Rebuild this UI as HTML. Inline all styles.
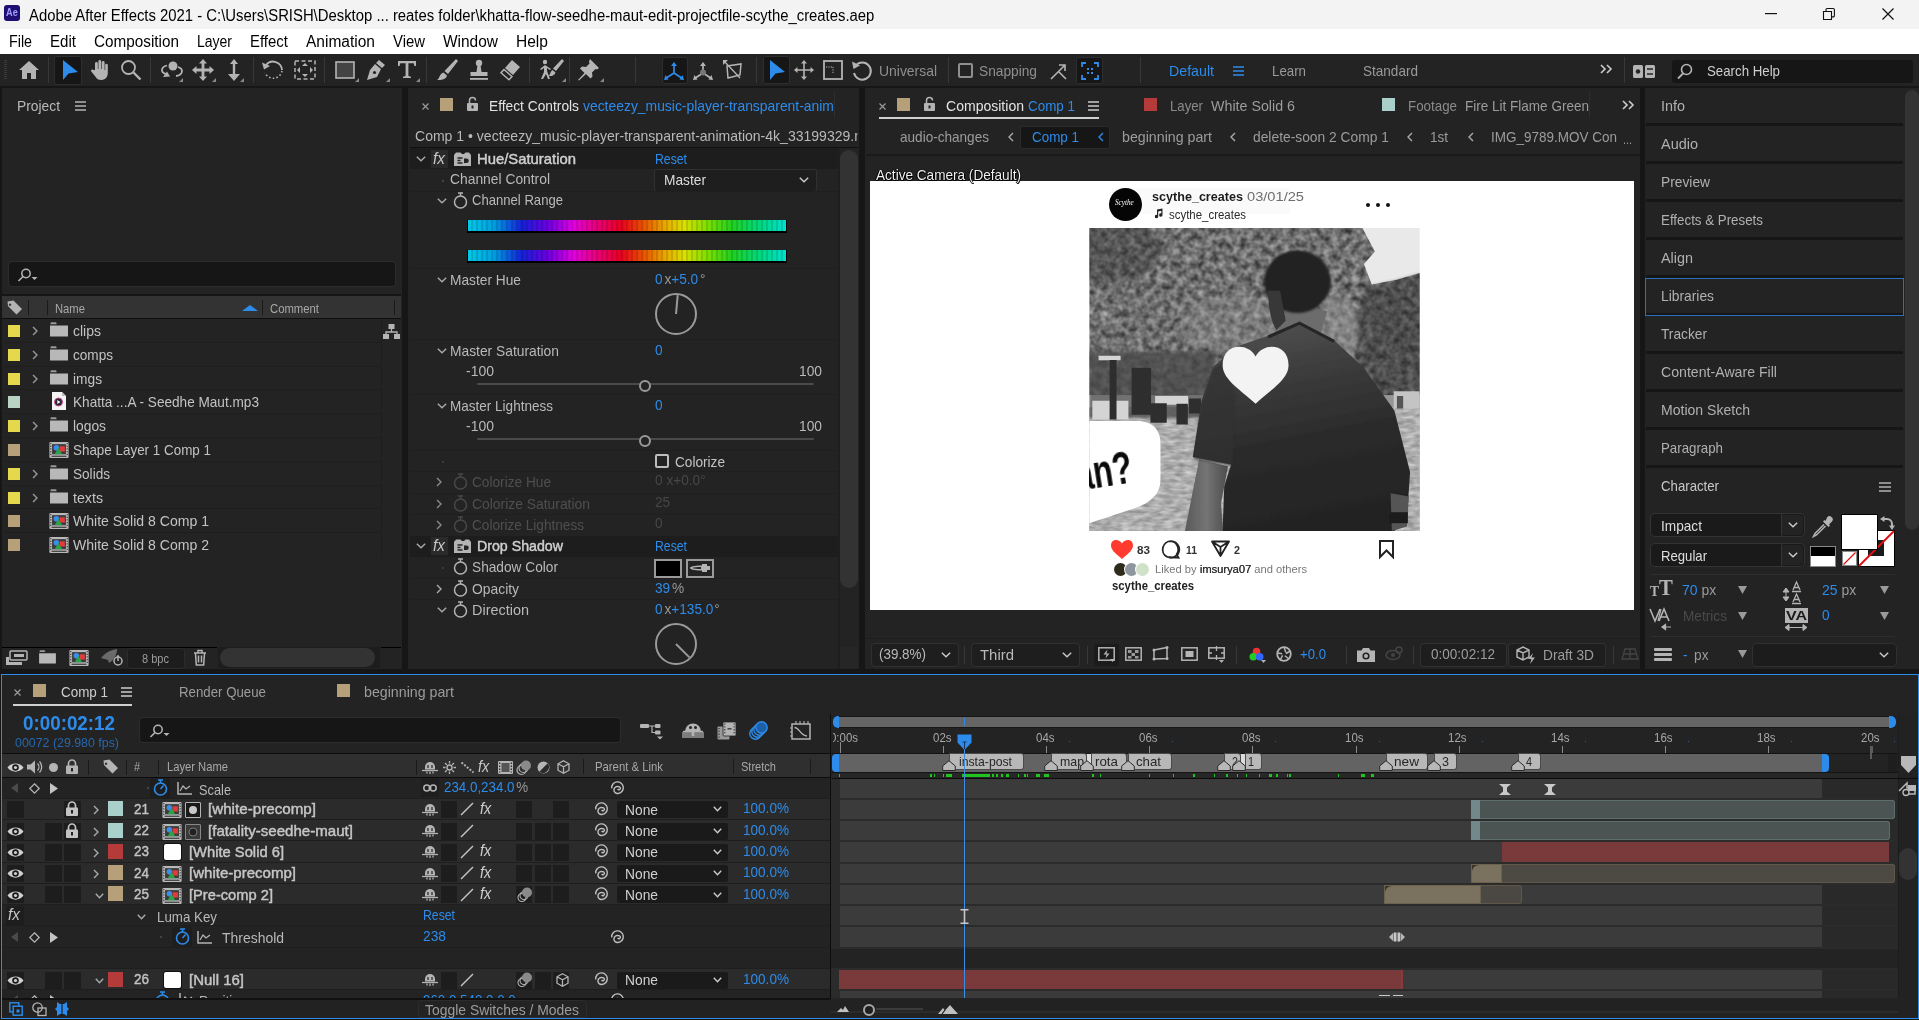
<!DOCTYPE html>
<html><head><meta charset="utf-8"><title>Adobe After Effects 2021</title>
<style>
html,body{margin:0;padding:0;}
body{width:1919px;height:1020px;overflow:hidden;background:#161616;position:relative;font-family:"Liberation Sans",sans-serif;}
body>*{position:absolute;}
.t{white-space:nowrap;line-height:20px;transform-origin:0 50%;}
svg{overflow:visible;}
</style></head><body>
<div style="left:0px;top:0px;width:1919px;height:29px;background:#f3f3f3;"></div>
<div style="left:4px;top:5px;width:16px;height:16px;background:#1f0f72;border-radius:3px;"></div>
<span class="t" style="left:6px;top:3.0px;font-size:10px;color:#a0a0ff;transform:scaleX(0.92);font-weight:bold;">Ae</span>
<span class="t" style="left:29px;top:5.5px;font-size:16px;color:#000;transform:scaleX(0.9286);">Adobe After Effects 2021 - C:\Users\SRISH\Desktop ... reates folder\khatta-flow-seedhe-maut-edit-projectfile-scythe_creates.aep</span>
<svg style="left:1765.0px;top:13.0px;" width="12" height="2" viewBox="0 0 12 2"><rect width="12" height="1.2" fill="#111"/></svg>
<svg style="left:1822.5px;top:8.0px;" width="12" height="12" viewBox="0 0 12 12"><path d="M0.5 3.5h8v8h-8z M3 3.5v-1.8a1.2 1.2 0 0 1 1.2-1.2h6a1.2 1.2 0 0 1 1.2 1.2v6a1.2 1.2 0 0 1-1.2 1.2h-1.7" fill="none" stroke="#111" stroke-width="1.1"/></svg>
<svg style="left:1882.0px;top:8.0px;" width="12" height="12" viewBox="0 0 12 12"><path d="M0.5 0.5l11 11M11.5 0.5l-11 11" stroke="#111" stroke-width="1.2"/></svg>
<div style="left:0px;top:29px;width:1919px;height:25px;background:#ffffff;"></div>
<span class="t" style="left:9px;top:32.0px;font-size:16px;color:#000;transform:scaleX(0.891);">File</span>
<span class="t" style="left:50px;top:32.0px;font-size:16px;color:#000;transform:scaleX(0.9422);">Edit</span>
<span class="t" style="left:94px;top:32.0px;font-size:16px;color:#000;transform:scaleX(0.9551);">Composition</span>
<span class="t" style="left:197px;top:32.0px;font-size:16px;color:#000;transform:scaleX(0.874);">Layer</span>
<span class="t" style="left:250px;top:32.0px;font-size:16px;color:#000;transform:scaleX(0.9347);">Effect</span>
<span class="t" style="left:306px;top:32.0px;font-size:16px;color:#000;transform:scaleX(0.9691);">Animation</span>
<span class="t" style="left:393px;top:32.0px;font-size:16px;color:#000;transform:scaleX(0.9296);">View</span>
<span class="t" style="left:443px;top:32.0px;font-size:16px;color:#000;transform:scaleX(0.9657);">Window</span>
<span class="t" style="left:516px;top:32.0px;font-size:16px;color:#000;transform:scaleX(0.9715);">Help</span>
<div style="left:0px;top:54px;width:1919px;height:33px;background:#232323;"></div>
<div style="left:0px;top:86px;width:1919px;height:2px;background:#161616;"></div>
<div style="left:4px;top:60px;width:3px;height:1px;background:#3a3a3a;"></div>
<div style="left:4px;top:62px;width:3px;height:1px;background:#3a3a3a;"></div>
<div style="left:4px;top:64px;width:3px;height:1px;background:#3a3a3a;"></div>
<div style="left:4px;top:66px;width:3px;height:1px;background:#3a3a3a;"></div>
<div style="left:4px;top:68px;width:3px;height:1px;background:#3a3a3a;"></div>
<div style="left:4px;top:70px;width:3px;height:1px;background:#3a3a3a;"></div>
<div style="left:4px;top:72px;width:3px;height:1px;background:#3a3a3a;"></div>
<div style="left:4px;top:74px;width:3px;height:1px;background:#3a3a3a;"></div>
<div style="left:4px;top:76px;width:3px;height:1px;background:#3a3a3a;"></div>
<div style="left:4px;top:78px;width:3px;height:1px;background:#3a3a3a;"></div>
<div style="left:48px;top:57px;width:1px;height:26px;background:#383838;"></div>
<div style="left:150px;top:57px;width:1px;height:26px;background:#383838;"></div>
<div style="left:253px;top:57px;width:1px;height:26px;background:#383838;"></div>
<div style="left:324px;top:57px;width:1px;height:26px;background:#383838;"></div>
<div style="left:426px;top:57px;width:1px;height:26px;background:#383838;"></div>
<div style="left:529px;top:57px;width:1px;height:26px;background:#383838;"></div>
<div style="left:569px;top:57px;width:1px;height:26px;background:#383838;"></div>
<div style="left:635px;top:57px;width:1px;height:26px;background:#383838;"></div>
<div style="left:756px;top:57px;width:1px;height:26px;background:#383838;"></div>
<div style="left:948px;top:57px;width:1px;height:26px;background:#383838;"></div>
<div style="left:1140px;top:57px;width:1px;height:26px;background:#383838;"></div>
<div style="left:1624px;top:57px;width:1px;height:26px;background:#383838;"></div>
<svg style="left:18.0px;top:60.0px;" width="22" height="20" viewBox="0 0 22 20"><path d="M11 1L1 10h3v9h5v-6h4v6h5v-9h3z" fill="#b4b4b4"/></svg>
<div style="left:54px;top:56px;width:28px;height:29px;background:#161616;border-radius:3px;box-shadow:0 0 0 1px #2e2e2e inset;"></div>
<svg style="left:62.0px;top:59.0px;" width="16" height="22" viewBox="0 0 16 22"><path d="M1 1v20l5.5-6.5L16 13z" fill="#2d8ceb"/></svg>
<svg style="left:89.0px;top:59.0px;" width="22" height="22" viewBox="0 0 22 22"><path d="M6 11V4.5a1.4 1.4 0 0 1 2.8 0V10h.6V2.5a1.4 1.4 0 0 1 2.8 0V10h.6V3.5a1.4 1.4 0 0 1 2.8 0V11h.6V6a1.3 1.3 0 0 1 2.6 0v8c0 4-2.5 7-6.5 7-3 0-4.6-1.3-6-3.6L2.3 12.5c-.8-1.4.9-2.6 2-1.4z" fill="#b4b4b4"/></svg>
<svg style="left:120.0px;top:59.0px;" width="22" height="22" viewBox="0 0 22 22"><circle cx="8.5" cy="8.5" r="6.5" fill="none" stroke="#b4b4b4" stroke-width="1.8"/><path d="M13.5 13.5l7 7" stroke="#b4b4b4" stroke-width="2.4"/></svg>
<svg style="left:160.0px;top:60.0px;" width="24" height="22" viewBox="0 0 24 22"><circle cx="13" cy="6" r="4.5" fill="#b4b4b4"/><path d="M7 5.5C1 7 0 12 6 14M18 7c6 2 5 8-2 9" fill="none" stroke="#b4b4b4" stroke-width="1.8"/><path d="M3 17l7-.5-3-5z" fill="#b4b4b4"/><path d="M23 22h-4l4-4z" fill="#888"/></svg>
<svg style="left:192.0px;top:59.0px;" width="22" height="22" viewBox="0 0 22 22"><path d="M11 0l4 4.5h-2.6V9.6H17.5V7l4.5 4-4.5 4v-2.6H12.4v5.1H15L11 22l-4-4.5h2.6v-5.1H4.5V15L0 11l4.5-4v2.6h5.1V4.5H7z" fill="#b4b4b4"/><path d="M24 23h-4l4-4z" fill="#888"/></svg>
<svg style="left:227.0px;top:59.0px;" width="14" height="22" viewBox="0 0 14 22"><path d="M7 0l4 5H8.2v10H13l-6 7-6-7h4.8V5H3z" fill="#b4b4b4"/><path d="M17 23h-4l4-4z" fill="#888"/></svg>
<svg style="left:262.0px;top:59.0px;" width="22" height="22" viewBox="0 0 22 22"><path d="M4 6A9 9 0 0 1 20 11" fill="none" stroke="#b4b4b4" stroke-width="1.8"/><path d="M0 3.5l2 7 6-3.5z" fill="#b4b4b4"/><path d="M20 12A9 9 0 0 1 3 14" fill="none" stroke="#b4b4b4" stroke-width="1.6" stroke-dasharray="1.5 2.2"/></svg>
<svg style="left:294.0px;top:60.0px;" width="22" height="20" viewBox="0 0 22 20"><rect x="1" y="1" width="20" height="18" fill="none" stroke="#b4b4b4" stroke-width="1.5" stroke-dasharray="4 2.5"/><path d="M11 3l3 3H8zM11 17l3-3H8zM3 10l3-3v6zM19 10l-3-3v6z" fill="#b4b4b4"/></svg>
<svg style="left:335.0px;top:61.0px;" width="20" height="18" viewBox="0 0 20 18"><rect x="1" y="1" width="18" height="16" fill="#444" stroke="#b4b4b4" stroke-width="1.6"/><path d="M24 21h-4l4-4z" fill="#888"/></svg>
<svg style="left:366.0px;top:59.0px;" width="20" height="22" viewBox="0 0 20 22"><path d="M13 1l6 5-3 3-6-5zM9 5l6 5-4 8L1 21l3-10z" fill="#b4b4b4"/><circle cx="8.5" cy="13.5" r="1.6" fill="#232323"/><path d="M24 23h-4l4-4z" fill="#888"/></svg>
<svg style="left:398.0px;top:61.0px;" width="18" height="18" viewBox="0 0 18 18"><path d="M0 0h18v5h-1.6l-.6-2.8H10.4V15l2.6.8V17H5v-1.2l2.6-.8V2.2H2.2L1.6 5H0z" fill="#b4b4b4"/><path d="M22 21h-4l4-4z" fill="#888"/></svg>
<svg style="left:436.0px;top:59.0px;" width="22" height="22" viewBox="0 0 22 22"><path d="M20 0l2 2-10 13-3.5-3zM7.5 13.5l3.5 3c-1 4-6 5-10 4.5 3-1.5 2-6 6.500-7.5z" fill="#b4b4b4"/></svg>
<svg style="left:468.0px;top:59.0px;" width="22" height="22" viewBox="0 0 22 22"><circle cx="11" cy="4" r="3.2" fill="#b4b4b4"/><path d="M9.5 6h3l1 7h6v4H2.500v-4h6z" fill="#b4b4b4"/><rect x="2" y="19" width="18" height="1.8" fill="#b4b4b4"/></svg>
<svg style="left:499.0px;top:59.0px;" width="22" height="22" viewBox="0 0 22 22"><path d="M13 1l8 7-7 8-8-7z" fill="#b4b4b4"/><path d="M5 10.500l8 7-3 3.300-8-7z" fill="none" stroke="#b4b4b4" stroke-width="1.5"/></svg>
<svg style="left:538.0px;top:59.0px;" width="26" height="22" viewBox="0 0 26 22"><circle cx="7" cy="3" r="2.2" fill="#b4b4b4"/><path d="M7 6l-5 4 1 1 3-2v4l-3 7h2l3-5 2 5h2l-3-8V9l3 2 1-1z" fill="#b4b4b4"/><path d="M24 0l2 2-8 10-3-2.500zM14.500 11l3 2.500c-1 3-4 4-7 3.500 2-1 1.500-4.500 4-6z" fill="#b4b4b4"/><path d="M28 23h-4l4-4z" fill="#888"/></svg>
<svg style="left:578.0px;top:59.0px;" width="22" height="22" viewBox="0 0 22 22"><path d="M12 0l9 9-2 1.500-1.500-.5-3.500 3.500.5 4-2 2-4.500-4.500L1 21.500 0 21l6.500-7L2 9.500l2-2 4 .5L11.500 4.500 11 2.500z" fill="#b4b4b4"/><path d="M26 23h-4l4-4z" fill="#888"/></svg>
<div style="left:662px;top:57px;width:26px;height:27px;background:#161616;border-radius:3px;box-shadow:0 0 0 1px #2e2e2e inset;"></div>
<svg style="left:664.0px;top:62.0px;" width="20" height="18" viewBox="0 0 20 18"><path d="M10 11V1.500M10 11l-8.500 5.500M10 11l8.500 5.500" stroke="#2d8ceb" stroke-width="1.700" fill="none"/><path d="M10 0l3 4H7zM0 18l1.500-5 3 4.500zM20 18l-1.500-5-3 4.500z" fill="#2d8ceb"/></svg>
<svg style="left:693.0px;top:62.0px;" width="20" height="18" viewBox="0 0 20 18"><path d="M10 11V1.500M10 11l-8.500 5.500M10 11l8.500 5.500" stroke="#b4b4b4" stroke-width="1.700" fill="none"/><path d="M10 0l3 4H7zM0 18l1.500-5 3 4.500zM20 18l-1.500-5-3 4.500z" fill="#b4b4b4"/><circle cx="10" cy="10.500" r="3" fill="#777"/></svg>
<svg style="left:723.0px;top:60.0px;" width="20" height="20" viewBox="0 0 20 20"><path d="M4 6l14-2-1 11-12 3z" fill="none" stroke="#b4b4b4" stroke-width="1.500"/><path d="M1 1l16 17" stroke="#b4b4b4" stroke-width="1.300"/><path d="M0 0h5l-5 5z" fill="#b4b4b4"/></svg>
<div style="left:763px;top:56px;width:27px;height:28px;background:#161616;border-radius:3px;box-shadow:0 0 0 1px #2e2e2e inset;"></div>
<svg style="left:769.0px;top:59.0px;" width="16" height="22" viewBox="0 0 16 22"><path d="M1 1v20l5.500-6.500L16 13z" fill="#2d8ceb"/></svg>
<svg style="left:794.0px;top:60.0px;" width="20" height="20" viewBox="0 0 20 20"><path d="M10 0l3 3.500h-2.200v5.700h5.700V7L20 10l-3.500 3v-2.200h-5.700v5.700H13L10 20l-3-3.500h2.200v-5.700H3.500V13L0 10l3.500-3v2.200h5.700V3.500H7z" fill="#b4b4b4"/></svg>
<svg style="left:823.0px;top:60.0px;" width="20" height="20" viewBox="0 0 20 20"><rect x="1" y="1" width="18" height="18" fill="none" stroke="#b4b4b4" stroke-width="1.800"/><path d="M3 7h7M10 7v7" stroke="#b4b4b4" stroke-width="1" stroke-dasharray="1.200 1.200"/></svg>
<svg style="left:851.0px;top:60.0px;" width="22" height="20" viewBox="0 0 22 20"><path d="M4.500 6A8.500 8.500 0 1 1 3 13" fill="none" stroke="#b4b4b4" stroke-width="2"/><path d="M1 1.500l1.500 7.500 6.500-3.500z" fill="#b4b4b4"/></svg>
<span class="t" style="left:879px;top:61.0px;font-size:15px;color:#8f8f8f;transform:scaleX(0.9278);">Universal</span>
<div style="left:958px;top:63px;width:15px;height:15px;background:transparent;border:2px solid #8f8f8f;border-radius:2px;box-sizing:border-box;"></div>
<span class="t" style="left:979px;top:61.0px;font-size:15px;color:#8f8f8f;transform:scaleX(0.915);">Snapping</span>
<svg style="left:1050.0px;top:62.0px;" width="18" height="18" viewBox="0 0 18 18"><path d="M1 17L15 3M9 3h6v6M9 10l7 7" fill="none" stroke="#b4b4b4" stroke-width="1.600"/></svg>
<div style="left:1076px;top:57px;width:27px;height:27px;background:#161616;border-radius:3px;box-shadow:0 0 0 1px #2e2e2e inset;"></div>
<svg style="left:1082.0px;top:63.0px;" width="16" height="16" viewBox="0 0 16 16"><path d="M0 4V0h4M12 0h4v4M16 12v4h-4M4 16H0v-4" fill="none" stroke="#2d8ceb" stroke-width="1.800"/><path d="M5 5h2v2H5zM9 5h2v2H9zM5 9h2v2H5zM9 9h2v2H9z" fill="#2d8ceb"/></svg>
<span class="t" style="left:1169px;top:61.0px;font-size:15px;color:#2d8ceb;transform:scaleX(0.9467);">Default</span>
<svg style="left:1232.5px;top:66.0px;" width="11" height="10" viewBox="0 0 11 10"><path d="M0 1h11M0 5h11M0 9h11" stroke="#2d8ceb" stroke-width="1.600"/></svg>
<span class="t" style="left:1272px;top:61.0px;font-size:15px;color:#9a9a9a;transform:scaleX(0.886);">Learn</span>
<span class="t" style="left:1363px;top:61.0px;font-size:15px;color:#9a9a9a;transform:scaleX(0.9033);">Standard</span>
<svg style="left:1600.0px;top:64.0px;" width="12" height="10" viewBox="0 0 12 10"><path d="M1 1l4 4-4 4M7 1l4 4-4 4" fill="none" stroke="#ccc" stroke-width="1.600"/></svg>
<svg style="left:1633.0px;top:64.5px;" width="22" height="13" viewBox="0 0 22 13"><rect x="0" y="0" width="10" height="13" rx="1.500" fill="#b4b4b4"/><rect x="12" y="0" width="10" height="13" rx="1.500" fill="#b4b4b4"/><circle cx="5" cy="6.500" r="2.200" fill="#232323"/><path d="M14 4h6M14 9h6" stroke="#232323" stroke-width="1.500"/></svg>
<div style="left:1672px;top:60px;width:241px;height:23px;background:#161616;border-radius:3px;"></div>
<svg style="left:1677.0px;top:63.0px;" width="16" height="16" viewBox="0 0 16 16"><circle cx="9.500" cy="6.500" r="5" fill="none" stroke="#b4b4b4" stroke-width="1.600"/><path d="M6 10.500L1 15.500" stroke="#b4b4b4" stroke-width="1.800"/></svg>
<span class="t" style="left:1707px;top:61.0px;font-size:15px;color:#cfcfcf;transform:scaleX(0.8843);">Search Help</span>
<div style="left:2px;top:88px;width:400px;height:581px;background:#232323;"></div>
<span class="t" style="left:17px;top:96.0px;font-size:15px;color:#b9b9b9;transform:scaleX(0.921);">Project</span>
<svg style="left:74.5px;top:101.0px;" width="11" height="10" viewBox="0 0 11 10"><path d="M0 1h11M0 5h11M0 9h11" stroke="#b4b4b4" stroke-width="1.500"/></svg>
<div style="left:9px;top:262px;width:386px;height:24px;background:#161616;border-radius:3px;box-shadow:0 0 0 1px #2c2c2c;"></div>
<svg style="left:18.0px;top:268.0px;" width="20" height="14" viewBox="0 0 20 14"><circle cx="8" cy="5.500" r="4.200" fill="none" stroke="#b4b4b4" stroke-width="1.500"/><path d="M5 8.500L0.500 13" stroke="#b4b4b4" stroke-width="1.600"/><path d="M13.500 9h6l-3 3z" fill="#b4b4b4"/></svg>
<div style="left:2px;top:294px;width:399px;height:2px;background:#151515;"></div>
<div style="left:2px;top:296px;width:399px;height:22px;background:#333333;"></div>
<div style="left:2px;top:318px;width:399px;height:1px;background:#0f0f0f;"></div>
<div style="left:28px;top:300px;width:1px;height:15px;background:#1a1a1a;"></div>
<div style="left:47px;top:300px;width:1px;height:15px;background:#1a1a1a;"></div>
<div style="left:262px;top:300px;width:1px;height:15px;background:#1a1a1a;"></div>
<div style="left:394px;top:300px;width:1px;height:15px;background:#1a1a1a;"></div>
<svg style="left:7.0px;top:299.5px;" width="16" height="15" viewBox="0 0 16 15"><path d="M0.500 1.500l6-1 8.500 8.500-5.500 5.500L1 6zM3 3.500a1.200 1.200 0 1 0 .1 0z" fill="#b4b4b4" fill-rule="evenodd"/></svg>
<span class="t" style="left:55px;top:299.0px;font-size:13px;color:#a8a8a8;transform:scaleX(0.8649);">Name</span>
<span class="t" style="left:270px;top:299.0px;font-size:13px;color:#a8a8a8;transform:scaleX(0.8694);">Comment</span>
<svg style="left:242.0px;top:305.0px;" width="16" height="6" viewBox="0 0 16 6"><path d="M0 6l8-6 8 6z" fill="#2d8ceb"/></svg>
<div style="left:8px;top:325px;width:12px;height:12px;background:#e4d84c;"></div>
<svg style="left:32.0px;top:326.0px;" width="6" height="10" viewBox="0 0 6 10"><path d="M1 1l4 4-4 4" fill="none" stroke="#9a9a9a" stroke-width="1.400"/></svg>
<svg style="left:50px;top:322px;" width="18" height="15" viewBox="0 0 18 15"><path d="M0 3.500h18v11H0z" fill="#b8b8b8"/><path d="M0.500 1.200a1 1 0 0 1 1-1h4a1 1 0 0 1 1 1v1H0.500z" fill="#9a9a9a"/></svg>
<span class="t" style="left:73px;top:321.0px;font-size:15px;color:#c3c3c3;transform:scaleX(0.9333);">clips</span>
<div style="left:4px;top:342px;width:377px;height:1px;background:#1e1e1e;"></div>
<div style="left:8px;top:349px;width:12px;height:12px;background:#e4d84c;"></div>
<svg style="left:32.0px;top:349.8px;" width="6" height="10" viewBox="0 0 6 10"><path d="M1 1l4 4-4 4" fill="none" stroke="#9a9a9a" stroke-width="1.400"/></svg>
<svg style="left:50px;top:346px;" width="18" height="15" viewBox="0 0 18 15"><path d="M0 3.500h18v11H0z" fill="#b8b8b8"/><path d="M0.500 1.200a1 1 0 0 1 1-1h4a1 1 0 0 1 1 1v1H0.500z" fill="#9a9a9a"/></svg>
<span class="t" style="left:73px;top:344.8px;font-size:15px;color:#c3c3c3;transform:scaleX(0.9052);">comps</span>
<div style="left:4px;top:366px;width:377px;height:1px;background:#1e1e1e;"></div>
<div style="left:8px;top:373px;width:12px;height:12px;background:#e4d84c;"></div>
<svg style="left:32.0px;top:373.6px;" width="6" height="10" viewBox="0 0 6 10"><path d="M1 1l4 4-4 4" fill="none" stroke="#9a9a9a" stroke-width="1.400"/></svg>
<svg style="left:50px;top:370px;" width="18" height="15" viewBox="0 0 18 15"><path d="M0 3.500h18v11H0z" fill="#b8b8b8"/><path d="M0.500 1.200a1 1 0 0 1 1-1h4a1 1 0 0 1 1 1v1H0.500z" fill="#9a9a9a"/></svg>
<span class="t" style="left:73px;top:368.6px;font-size:15px;color:#c3c3c3;transform:scaleX(0.9156);">imgs</span>
<div style="left:4px;top:389px;width:377px;height:1px;background:#1e1e1e;"></div>
<div style="left:8px;top:396px;width:12px;height:12px;background:#b9d3c4;"></div>
<svg style="left:52px;top:392px;" width="14" height="18" viewBox="0 0 14 18"><path d="M0 0h10l4 4v14H0z" fill="#f4f4f4"/><path d="M10 0v4h4z" fill="#bbb"/><circle cx="6.500" cy="10" r="4" fill="#2a2438"/><circle cx="6.500" cy="10" r="4" fill="none" stroke="#d84a8a" stroke-width="0.900"/><path d="M5.300 8v4l3.200-2z" fill="#fff"/></svg>
<span class="t" style="left:73px;top:392.4px;font-size:15px;color:#c3c3c3;transform:scaleX(0.9065);">Khatta ...A - Seedhe Maut.mp3</span>
<div style="left:4px;top:413px;width:377px;height:1px;background:#1e1e1e;"></div>
<div style="left:8px;top:420px;width:12px;height:12px;background:#e4d84c;"></div>
<svg style="left:32.0px;top:421.2px;" width="6" height="10" viewBox="0 0 6 10"><path d="M1 1l4 4-4 4" fill="none" stroke="#9a9a9a" stroke-width="1.400"/></svg>
<svg style="left:50px;top:417px;" width="18" height="15" viewBox="0 0 18 15"><path d="M0 3.500h18v11H0z" fill="#b8b8b8"/><path d="M0.500 1.200a1 1 0 0 1 1-1h4a1 1 0 0 1 1 1v1H0.500z" fill="#9a9a9a"/></svg>
<span class="t" style="left:73px;top:416.2px;font-size:15px;color:#c3c3c3;transform:scaleX(0.9203);">logos</span>
<div style="left:4px;top:437px;width:377px;height:1px;background:#1e1e1e;"></div>
<div style="left:8px;top:444px;width:12px;height:12px;background:#b5a07a;"></div>
<svg style="left:49px;top:442px;" width="20" height="16" viewBox="0 0 18 15"><rect x="0" y="0" width="18" height="15" rx="1" fill="#b8b8b8"/><rect x="2.500" y="2" width="13" height="9.500" fill="#3c3c3c"/><path d="M0.800 1.500h1M0.800 4h1M0.800 6.500h1M0.800 9h1M0.800 11.500h1M16.200 1.500h1M16.200 4h1M16.200 6.500h1M16.200 9h1M16.200 11.500h1" stroke="#333" stroke-width="1.200"/><circle cx="6.500" cy="5.500" r="2.600" fill="#3b8ee8"/><rect x="9.500" y="4" width="5" height="5" fill="#e23b3b"/><path d="M8.500 5.500l3.500 6h-7z" fill="#2aa44a"/><rect x="2" y="12.800" width="14" height="1.200" fill="#444"/></svg>
<span class="t" style="left:73px;top:440.0px;font-size:15px;color:#c3c3c3;transform:scaleX(0.8944);">Shape Layer 1 Comp 1</span>
<div style="left:4px;top:461px;width:377px;height:1px;background:#1e1e1e;"></div>
<div style="left:8px;top:468px;width:12px;height:12px;background:#e4d84c;"></div>
<svg style="left:32.0px;top:468.8px;" width="6" height="10" viewBox="0 0 6 10"><path d="M1 1l4 4-4 4" fill="none" stroke="#9a9a9a" stroke-width="1.400"/></svg>
<svg style="left:50px;top:465px;" width="18" height="15" viewBox="0 0 18 15"><path d="M0 3.500h18v11H0z" fill="#b8b8b8"/><path d="M0.500 1.200a1 1 0 0 1 1-1h4a1 1 0 0 1 1 1v1H0.500z" fill="#9a9a9a"/></svg>
<span class="t" style="left:73px;top:463.8px;font-size:15px;color:#c3c3c3;transform:scaleX(0.9059);">Solids</span>
<div style="left:4px;top:485px;width:377px;height:1px;background:#1e1e1e;"></div>
<div style="left:8px;top:492px;width:12px;height:12px;background:#e4d84c;"></div>
<svg style="left:32.0px;top:492.6px;" width="6" height="10" viewBox="0 0 6 10"><path d="M1 1l4 4-4 4" fill="none" stroke="#9a9a9a" stroke-width="1.400"/></svg>
<svg style="left:50px;top:489px;" width="18" height="15" viewBox="0 0 18 15"><path d="M0 3.500h18v11H0z" fill="#b8b8b8"/><path d="M0.500 1.200a1 1 0 0 1 1-1h4a1 1 0 0 1 1 1v1H0.500z" fill="#9a9a9a"/></svg>
<span class="t" style="left:73px;top:487.6px;font-size:15px;color:#c3c3c3;transform:scaleX(0.9467);">texts</span>
<div style="left:4px;top:508px;width:377px;height:1px;background:#1e1e1e;"></div>
<div style="left:8px;top:515px;width:12px;height:12px;background:#b5a07a;"></div>
<svg style="left:49px;top:513px;" width="20" height="16" viewBox="0 0 18 15"><rect x="0" y="0" width="18" height="15" rx="1" fill="#b8b8b8"/><rect x="2.500" y="2" width="13" height="9.500" fill="#3c3c3c"/><path d="M0.800 1.500h1M0.800 4h1M0.800 6.500h1M0.800 9h1M0.800 11.500h1M16.200 1.500h1M16.200 4h1M16.200 6.500h1M16.200 9h1M16.200 11.500h1" stroke="#333" stroke-width="1.200"/><circle cx="6.500" cy="5.500" r="2.600" fill="#3b8ee8"/><rect x="9.500" y="4" width="5" height="5" fill="#e23b3b"/><path d="M8.500 5.500l3.500 6h-7z" fill="#2aa44a"/><rect x="2" y="12.800" width="14" height="1.200" fill="#444"/></svg>
<span class="t" style="left:73px;top:511.4px;font-size:15px;color:#c3c3c3;transform:scaleX(0.9374);">White Solid 8 Comp 1</span>
<div style="left:4px;top:532px;width:377px;height:1px;background:#1e1e1e;"></div>
<div style="left:8px;top:539px;width:12px;height:12px;background:#b5a07a;"></div>
<svg style="left:49px;top:537px;" width="20" height="16" viewBox="0 0 18 15"><rect x="0" y="0" width="18" height="15" rx="1" fill="#b8b8b8"/><rect x="2.500" y="2" width="13" height="9.500" fill="#3c3c3c"/><path d="M0.800 1.500h1M0.800 4h1M0.800 6.500h1M0.800 9h1M0.800 11.500h1M16.200 1.500h1M16.200 4h1M16.200 6.500h1M16.200 9h1M16.200 11.500h1" stroke="#333" stroke-width="1.200"/><circle cx="6.500" cy="5.500" r="2.600" fill="#3b8ee8"/><rect x="9.500" y="4" width="5" height="5" fill="#e23b3b"/><path d="M8.500 5.500l3.500 6h-7z" fill="#2aa44a"/><rect x="2" y="12.800" width="14" height="1.200" fill="#444"/></svg>
<span class="t" style="left:73px;top:535.2px;font-size:15px;color:#c3c3c3;transform:scaleX(0.9374);">White Solid 8 Comp 2</span>
<div style="left:381px;top:320px;width:1px;height:236px;background:#1e1e1e;"></div>
<svg style="left:382.5px;top:323.5px;" width="17" height="15" viewBox="0 0 17 15"><rect x="5.500" y="0" width="6" height="5" fill="#b4b4b4"/><rect x="0" y="10" width="6" height="5" fill="#b4b4b4"/><rect x="11" y="10" width="6" height="5" fill="#b4b4b4"/><path d="M8.500 5v3M3 10V8h11v2" fill="none" stroke="#b4b4b4" stroke-width="1.300"/></svg>
<div style="left:2px;top:647px;width:215px;height:1px;background:#000;"></div>
<div style="left:381px;top:647px;width:20px;height:1px;background:#000;"></div>
<div style="left:218px;top:647px;width:162px;height:21px;background:#1d1d1d;"></div>
<div style="left:220px;top:648px;width:155px;height:19px;background:#333333;border-radius:10px;"></div>
<div style="left:128px;top:649px;width:56px;height:19px;background:#1d1d1d;border-radius:3px;box-shadow:0 0 0 1px #2b2b2b;"></div>
<span class="t" style="left:142px;top:649.0px;font-size:13px;color:#9a9a9a;transform:scaleX(0.8487);">8 bpc</span>
<svg style="left:6.0px;top:650.0px;" width="22" height="16" viewBox="0 0 22 16"><rect x="4" y="1" width="17" height="9" rx="1" fill="none" stroke="#b4b4b4" stroke-width="1.500"/><rect x="8" y="4" width="10" height="3" fill="#b4b4b4"/><path d="M0 7h3v8H0zM0 12h16v3H0z" fill="#b4b4b4"/></svg>
<svg style="left:39px;top:650px;" width="17" height="14" viewBox="0 0 18 15"><path d="M0 3.500h18v11H0z" fill="#b8b8b8"/><path d="M0.500 1.200a1 1 0 0 1 1-1h4a1 1 0 0 1 1 1v1H0.500z" fill="#9a9a9a"/></svg>
<svg style="left:68px;top:650px;" width="22" height="16" viewBox="0 0 18 15"><rect x="0" y="0" width="18" height="15" rx="1" fill="#b8b8b8"/><rect x="2.500" y="2" width="13" height="9.500" fill="#3c3c3c"/><path d="M0.800 1.500h1M0.800 4h1M0.800 6.500h1M0.800 9h1M0.800 11.500h1M16.200 1.500h1M16.200 4h1M16.200 6.500h1M16.200 9h1M16.200 11.500h1" stroke="#333" stroke-width="1.200"/><circle cx="6.500" cy="5.500" r="2.600" fill="#3b8ee8"/><rect x="9.500" y="4" width="5" height="5" fill="#e23b3b"/><path d="M8.500 5.500l3.500 6h-7z" fill="#2aa44a"/><rect x="2" y="12.800" width="14" height="1.200" fill="#444"/></svg>
<svg style="left:101.0px;top:649.0px;" width="22" height="18" viewBox="0 0 22 18"><path d="M0 9C4 4 9 1 16 0c0 6-3 11-8 14l-1-3z" fill="#6a6a6a"/><circle cx="17" cy="12" r="4" fill="none" stroke="#b4b4b4" stroke-width="1.500"/><path d="M17 6v6" stroke="#b4b4b4" stroke-width="1.500"/></svg>
<svg style="left:193.0px;top:648.5px;" width="14" height="17" viewBox="0 0 14 17"><path d="M1 4h12M5 4V1.500h4V4M2.500 4l.8 12h7.400l.8-12M5.500 6.500v7M8.500 6.500v7" fill="none" stroke="#b4b4b4" stroke-width="1.500"/></svg>
<div style="left:408px;top:88px;width:451px;height:581px;background:#232323;"></div>
<svg style="left:421.5px;top:102.5px;" width="7" height="7" viewBox="0 0 7 7"><path d="M0.500 0.500l6 6M6.500 0.500l-6 6" stroke="#9a9a9a" stroke-width="1.200"/></svg>
<div style="left:440px;top:98px;width:13px;height:13px;background:#b5a07a;"></div>
<svg style="left:466.5px;top:97.0px;" width="11" height="14" viewBox="0 0 11 14"><rect x="0" y="6" width="11" height="8" rx="1" fill="#b4b4b4"/><path d="M2.500 6V3.500a3 3 0 0 1 6 0" fill="none" stroke="#b4b4b4" stroke-width="1.500"/><rect x="4.500" y="8.500" width="2" height="3" fill="#232323"/></svg>
<span class="t" style="left:489px;top:96.0px;font-size:15px;color:#e4e4e4;transform:scaleX(0.9172);">Effect Controls</span>
<span class="t" style="left:583px;top:96.0px;font-size:15px;color:#2d8ceb;transform:scaleX(0.9262);">vecteezy_music-player-transparent-anim</span>
<div style="left:834px;top:92px;width:1px;height:26px;background:#2e2e2e;"></div>
<span class="t" style="left:415px;top:126.0px;font-size:15px;color:#b9b9b9;transform:scaleX(0.9352);clip-path:inset(0 1.500px 0 0);">Comp 1 • vecteezy_music-player-transparent-animation-4k_33199329.r</span>
<div style="left:410px;top:147px;width:448px;height:1px;background:#111;"></div>
<div style="left:838px;top:149px;width:2px;height:520px;background:#1e1e1e;"></div>
<div style="left:840px;top:149px;width:18px;height:520px;background:#232323;"></div>
<div style="left:840px;top:150px;width:18px;height:438px;background:#333;border-radius:9px;"></div>
<div style="left:840px;top:647px;width:18px;height:21px;background:#262626;"></div>
<div style="left:410px;top:148px;width:428px;height:21px;background:#1d1d1d;"></div>
<svg style="left:416.0px;top:156.0px;" width="10" height="6" viewBox="0 0 10 6"><path d="M0.800 0.800l4.2 4 4.2-4" fill="none" stroke="#aaa" stroke-width="1.400"/></svg>
<div style="left:431px;top:150px;width:17px;height:18px;background:#2a2a2a;"></div>
<span class="t" style="left:433px;top:148.5px;font-size:17px;color:#c8c8c8;transform:scaleX(0.9);font-style:italic;">fx</span>
<svg style="left:453.5px;top:152.0px;" width="17" height="14" viewBox="0 0 17 14"><path d="M0 3l2-2.500h4.500L8 2h2L11.500.500H15L17 3v11H0z" fill="#b4b4b4"/><path d="M3.500 6h5M3.500 8.500h3M3.500 11h5" stroke="#232323" stroke-width="1.300"/><path d="M10 6.500h2.500a2.200 2.200 0 0 1 0 4.500H10z" fill="#232323"/></svg>
<span class="t" style="left:477px;top:149.0px;font-size:15px;color:#cfcfcf;transform:scaleX(0.9892);-webkit-text-stroke:0.450px #cfcfcf;">Hue/Saturation</span>
<span class="t" style="left:655px;top:149.0px;font-size:15px;color:#2d8ceb;transform:scaleX(0.8166);">Reset</span>
<span class="t" style="left:450px;top:169.0px;font-size:15px;color:#b9b9b9;transform:scaleX(0.9225);">Channel Control</span>
<div style="left:442px;top:180px;width:2px;height:2px;background:#444;"></div>
<div style="left:655px;top:170px;width:161px;height:21px;background:#1e1e1e;box-shadow:0 0 0 1px #303030;border-radius:2px;"></div>
<span class="t" style="left:664px;top:170.0px;font-size:15px;color:#dcdcdc;transform:scaleX(0.9158);">Master</span>
<svg style="left:799.0px;top:177.0px;" width="10" height="6" viewBox="0 0 10 6"><path d="M0.800 0.800l4.2 4 4.2-4" fill="none" stroke="#ccc" stroke-width="1.400"/></svg>
<div style="left:410px;top:191px;width:428px;height:1px;background:#1f1f1f;"></div>
<svg style="left:437.0px;top:198.0px;" width="10" height="6" viewBox="0 0 10 6"><path d="M0.800 0.800l4.2 4 4.2-4" fill="none" stroke="#aaa" stroke-width="1.400"/></svg>
<svg style="left:452.5px;top:191.5px;" width="15" height="17" viewBox="0 0 15 17"><circle cx="7.500" cy="10" r="6" fill="none" stroke="#b4b4b4" stroke-width="1.500"/><path d="M5 1h5M7.500 1v3" stroke="#b4b4b4" stroke-width="1.400"/></svg>
<span class="t" style="left:472px;top:190.0px;font-size:15px;color:#b9b9b9;transform:scaleX(0.8729);">Channel Range</span>
<div style="left:467px;top:220px;width:320px;height:13px;background:#000;"></div>
<div style="left:468px;top:220px;width:318px;height:11px;background:repeating-linear-gradient(90deg,rgba(0,0,0,0) 0px,rgba(0,0,0,0) 3px,rgba(0,0,0,0.120) 3px,rgba(0,0,0,0.120) 5px),linear-gradient(90deg,#00c8e6 0%,#00a0e0 8%,#1420d8 17%,#6a00e0 25%,#e000e0 33%,#e80080 40%,#e80020 48%,#e85000 55%,#e8a800 62%,#d8e000 68%,#80e000 75%,#20d020 83%,#00d880 92%,#00e0d0 100%);"></div>
<div style="left:467px;top:250px;width:320px;height:13px;background:#000;"></div>
<div style="left:468px;top:250px;width:318px;height:11px;background:repeating-linear-gradient(90deg,rgba(0,0,0,0) 0px,rgba(0,0,0,0) 3px,rgba(0,0,0,0.120) 3px,rgba(0,0,0,0.120) 5px),linear-gradient(90deg,#00c8e6 0%,#00a0e0 8%,#1420d8 17%,#6a00e0 25%,#e000e0 33%,#e80080 40%,#e80020 48%,#e85000 55%,#e8a800 62%,#d8e000 68%,#80e000 75%,#20d020 83%,#00d880 92%,#00e0d0 100%);"></div>
<div style="left:410px;top:268px;width:428px;height:1px;background:#1f1f1f;"></div>
<svg style="left:437.0px;top:277.0px;" width="10" height="6" viewBox="0 0 10 6"><path d="M0.800 0.800l4.2 4 4.2-4" fill="none" stroke="#aaa" stroke-width="1.400"/></svg>
<span class="t" style="left:450px;top:270.0px;font-size:15px;color:#b9b9b9;transform:scaleX(0.9156);">Master Hue</span>
<span class="t" style="left:655px;top:269.0px;font-size:15px;color:#2d8ceb;transform:scaleX(0.91);">0<span style="color:#999;margin-left:2px">x</span>+5.0<span style="color:#999;margin-left:2px">°</span></span>
<svg style="left:654px;top:292px;" width="44" height="44" viewBox="0 0 44 44"><circle cx="22" cy="22" r="20" fill="none" stroke="#9a9a9a" stroke-width="2"/><path d="M22 22L23.7 3.1" stroke="#9a9a9a" stroke-width="2"/></svg>
<div style="left:410px;top:339px;width:428px;height:1px;background:#1f1f1f;"></div>
<svg style="left:437.0px;top:348.0px;" width="10" height="6" viewBox="0 0 10 6"><path d="M0.800 0.800l4.2 4 4.2-4" fill="none" stroke="#aaa" stroke-width="1.400"/></svg>
<span class="t" style="left:450px;top:341.0px;font-size:15px;color:#b9b9b9;transform:scaleX(0.9204);">Master Saturation</span>
<span class="t" style="left:655px;top:340.0px;font-size:15px;color:#2d8ceb;transform:scaleX(0.91);">0</span>
<span class="t" style="left:466px;top:361.0px;font-size:15px;color:#b9b9b9;transform:scaleX(0.9324);">-100</span>
<span class="t" style="left:799px;top:361.0px;font-size:15px;color:#b9b9b9;transform:scaleX(0.9189);">100</span>
<div style="left:477px;top:383px;width:337px;height:2px;background:#4a4a4a;border-radius:1px;"></div>
<div style="left:639px;top:380px;width:12px;height:12px;background:#232323;border:2.500px solid #9a9a9a;border-radius:50%;box-sizing:border-box;"></div>
<div style="left:410px;top:394px;width:428px;height:1px;background:#1f1f1f;"></div>
<svg style="left:437.0px;top:403.0px;" width="10" height="6" viewBox="0 0 10 6"><path d="M0.800 0.800l4.2 4 4.2-4" fill="none" stroke="#aaa" stroke-width="1.400"/></svg>
<span class="t" style="left:450px;top:396.0px;font-size:15px;color:#b9b9b9;transform:scaleX(0.9015);">Master Lightness</span>
<span class="t" style="left:655px;top:395.0px;font-size:15px;color:#2d8ceb;transform:scaleX(0.91);">0</span>
<span class="t" style="left:466px;top:416.0px;font-size:15px;color:#b9b9b9;transform:scaleX(0.9324);">-100</span>
<span class="t" style="left:799px;top:416.0px;font-size:15px;color:#b9b9b9;transform:scaleX(0.9189);">100</span>
<div style="left:477px;top:438px;width:337px;height:2px;background:#4a4a4a;border-radius:1px;"></div>
<div style="left:639px;top:435px;width:12px;height:12px;background:#232323;border:2.500px solid #9a9a9a;border-radius:50%;box-sizing:border-box;"></div>
<div style="left:410px;top:450px;width:428px;height:1px;background:#1f1f1f;"></div>
<div style="left:442px;top:461px;width:2px;height:2px;background:#3a3a3a;"></div>
<div style="left:655px;top:454px;width:14px;height:14px;background:transparent;border:2px solid #bdbdbd;border-radius:2px;box-sizing:border-box;"></div>
<span class="t" style="left:675px;top:452.0px;font-size:15px;color:#c3c3c3;transform:scaleX(0.9088);">Colorize</span>
<div style="left:410px;top:471px;width:428px;height:1px;background:#1f1f1f;"></div>
<svg style="left:436.0px;top:477.0px;" width="6" height="10" viewBox="0 0 6 10"><path d="M1 1l4 4-4 4" fill="none" stroke="#8a8a8a" stroke-width="1.400"/></svg>
<svg style="left:452.5px;top:472.5px;" width="15" height="17" viewBox="0 0 15 17"><circle cx="7.500" cy="10" r="6" fill="none" stroke="#484848" stroke-width="1.500"/><path d="M5 1h5M7.500 1v3" stroke="#484848" stroke-width="1.400"/></svg>
<span class="t" style="left:472px;top:472.0px;font-size:15px;color:#4f4f4f;transform:scaleX(0.9112);">Colorize Hue</span>
<span class="t" style="left:655px;top:470.0px;font-size:15px;color:#474747;transform:scaleX(0.91);">0 x+0.0°</span>
<div style="left:410px;top:493px;width:428px;height:1px;background:#1f1f1f;"></div>
<svg style="left:436.0px;top:499.0px;" width="6" height="10" viewBox="0 0 6 10"><path d="M1 1l4 4-4 4" fill="none" stroke="#8a8a8a" stroke-width="1.400"/></svg>
<svg style="left:452.5px;top:494.5px;" width="15" height="17" viewBox="0 0 15 17"><circle cx="7.500" cy="10" r="6" fill="none" stroke="#484848" stroke-width="1.500"/><path d="M5 1h5M7.500 1v3" stroke="#484848" stroke-width="1.400"/></svg>
<span class="t" style="left:472px;top:494.0px;font-size:15px;color:#4f4f4f;transform:scaleX(0.9249);">Colorize Saturation</span>
<span class="t" style="left:655px;top:492.0px;font-size:15px;color:#474747;transform:scaleX(0.91);">25</span>
<div style="left:410px;top:514px;width:428px;height:1px;background:#1f1f1f;"></div>
<svg style="left:436.0px;top:520.0px;" width="6" height="10" viewBox="0 0 6 10"><path d="M1 1l4 4-4 4" fill="none" stroke="#8a8a8a" stroke-width="1.400"/></svg>
<svg style="left:452.5px;top:515.5px;" width="15" height="17" viewBox="0 0 15 17"><circle cx="7.500" cy="10" r="6" fill="none" stroke="#484848" stroke-width="1.500"/><path d="M5 1h5M7.500 1v3" stroke="#484848" stroke-width="1.400"/></svg>
<span class="t" style="left:472px;top:515.0px;font-size:15px;color:#4f4f4f;transform:scaleX(0.9076);">Colorize Lightness</span>
<span class="t" style="left:655px;top:513.0px;font-size:15px;color:#474747;transform:scaleX(0.91);">0</span>
<div style="left:410px;top:536px;width:428px;height:21px;background:#1d1d1d;"></div>
<svg style="left:416.0px;top:543.0px;" width="10" height="6" viewBox="0 0 10 6"><path d="M0.800 0.800l4.2 4 4.2-4" fill="none" stroke="#aaa" stroke-width="1.400"/></svg>
<div style="left:431px;top:537px;width:17px;height:18px;background:#2a2a2a;"></div>
<span class="t" style="left:433px;top:535.5px;font-size:17px;color:#c8c8c8;transform:scaleX(0.9);font-style:italic;">fx</span>
<svg style="left:453.5px;top:539.0px;" width="17" height="14" viewBox="0 0 17 14"><path d="M0 3l2-2.500h4.500L8 2h2L11.500.500H15L17 3v11H0z" fill="#b4b4b4"/><path d="M3.500 6h5M3.500 8.500h3M3.500 11h5" stroke="#232323" stroke-width="1.300"/><path d="M10 6.500h2.500a2.200 2.200 0 0 1 0 4.500H10z" fill="#232323"/></svg>
<span class="t" style="left:477px;top:536.0px;font-size:15px;color:#cfcfcf;transform:scaleX(0.9462);-webkit-text-stroke:0.450px #cfcfcf;">Drop Shadow</span>
<span class="t" style="left:655px;top:536.0px;font-size:15px;color:#2d8ceb;transform:scaleX(0.8166);">Reset</span>
<div style="left:442px;top:567px;width:2px;height:2px;background:#3a3a3a;"></div>
<svg style="left:452.5px;top:557.5px;" width="15" height="17" viewBox="0 0 15 17"><circle cx="7.500" cy="10" r="6" fill="none" stroke="#b4b4b4" stroke-width="1.500"/><path d="M5 1h5M7.500 1v3" stroke="#b4b4b4" stroke-width="1.400"/></svg>
<span class="t" style="left:472px;top:557.0px;font-size:15px;color:#b9b9b9;transform:scaleX(0.9128);">Shadow Color</span>
<div style="left:654px;top:559px;width:28px;height:19px;background:#000;border:2px solid #9a9a9a;box-sizing:border-box;"></div>
<div style="left:686px;top:559px;width:28px;height:19px;background:#232323;border:2px solid #9a9a9a;box-sizing:border-box;"></div>
<svg style="left:690.0px;top:564.0px;" width="20" height="8" viewBox="0 0 20 8"><path d="M0 4c0-2 8-2.500 12-2.500V0h5v2h3v4h-3v2h-5V6.500C8 6.500 0 6 0 4z" fill="#b4b4b4"/><path d="M2 4c2-.8 6-1 9-1v2c-3 0-7-.2-9-1z" fill="#232323"/></svg>
<div style="left:410px;top:578px;width:428px;height:1px;background:#1f1f1f;"></div>
<svg style="left:436.0px;top:584.0px;" width="6" height="10" viewBox="0 0 6 10"><path d="M1 1l4 4-4 4" fill="none" stroke="#aaa" stroke-width="1.400"/></svg>
<svg style="left:452.5px;top:579.5px;" width="15" height="17" viewBox="0 0 15 17"><circle cx="7.500" cy="10" r="6" fill="none" stroke="#b4b4b4" stroke-width="1.500"/><path d="M5 1h5M7.500 1v3" stroke="#b4b4b4" stroke-width="1.400"/></svg>
<span class="t" style="left:472px;top:579.0px;font-size:15px;color:#b9b9b9;transform:scaleX(0.9241);">Opacity</span>
<span class="t" style="left:655px;top:578.0px;font-size:15px;color:#2d8ceb;transform:scaleX(0.91);">39<span style="color:#999;margin-left:2px">%</span></span>
<div style="left:410px;top:599px;width:428px;height:1px;background:#1f1f1f;"></div>
<svg style="left:437.0px;top:607.0px;" width="10" height="6" viewBox="0 0 10 6"><path d="M0.800 0.800l4.2 4 4.2-4" fill="none" stroke="#aaa" stroke-width="1.400"/></svg>
<svg style="left:452.5px;top:600.5px;" width="15" height="17" viewBox="0 0 15 17"><circle cx="7.500" cy="10" r="6" fill="none" stroke="#b4b4b4" stroke-width="1.500"/><path d="M5 1h5M7.500 1v3" stroke="#b4b4b4" stroke-width="1.400"/></svg>
<span class="t" style="left:472px;top:600.0px;font-size:15px;color:#b9b9b9;transform:scaleX(0.963);">Direction</span>
<span class="t" style="left:655px;top:599.0px;font-size:15px;color:#2d8ceb;transform:scaleX(0.91);">0<span style="color:#999;margin-left:2px">x</span>+135.0<span style="color:#999;margin-left:1px">°</span></span>
<svg style="left:654px;top:622px;" width="44" height="44" viewBox="0 0 44 44"><circle cx="22" cy="22" r="20" fill="none" stroke="#9a9a9a" stroke-width="2"/><path d="M22 22L35.4 35.4" stroke="#9a9a9a" stroke-width="2"/></svg>
<div style="left:865px;top:88px;width:775px;height:581px;background:#232323;"></div>
<svg style="left:878.5px;top:102.5px;" width="7" height="7" viewBox="0 0 7 7"><path d="M0.500 0.500l6 6M6.500 0.500l-6 6" stroke="#9a9a9a" stroke-width="1.200"/></svg>
<div style="left:897px;top:98px;width:13px;height:13px;background:#b5a07a;"></div>
<svg style="left:923.5px;top:97.0px;" width="11" height="14" viewBox="0 0 11 14"><rect x="0" y="6" width="11" height="8" rx="1" fill="#b4b4b4"/><path d="M2.500 6V3.500a3 3 0 0 1 6 0" fill="none" stroke="#b4b4b4" stroke-width="1.500"/><rect x="4.500" y="8.500" width="2" height="3" fill="#232323"/></svg>
<span class="t" style="left:946px;top:96.0px;font-size:15px;color:#e4e4e4;transform:scaleX(0.9355);">Composition</span>
<span class="t" style="left:1028px;top:96.0px;font-size:15px;color:#2d8ceb;transform:scaleX(0.8947);">Comp 1</span>
<svg style="left:1087.5px;top:101.0px;" width="11" height="10" viewBox="0 0 11 10"><path d="M0 1h11M0 5h11M0 9h11" stroke="#ccc" stroke-width="1.500"/></svg>
<div style="left:879px;top:117px;width:220px;height:2px;background:#d0d0d0;"></div>
<div style="left:1144px;top:98px;width:13px;height:13px;background:#b53a3a;"></div>
<span class="t" style="left:1170px;top:96.0px;font-size:15px;color:#8a8a8a;transform:scaleX(0.8793);">Layer</span>
<span class="t" style="left:1211px;top:96.0px;font-size:15px;color:#9c9c9c;transform:scaleX(0.9505);">White Solid 6</span>
<div style="left:1382px;top:98px;width:13px;height:13px;background:#a9d0cb;"></div>
<span class="t" style="left:1408px;top:96.0px;font-size:15px;color:#8a8a8a;transform:scaleX(0.8902);">Footage</span>
<span class="t" style="left:1465px;top:96.0px;font-size:15px;color:#9c9c9c;transform:scaleX(0.9014);">Fire Lit Flame Green</span>
<div style="left:1589px;top:92px;width:1px;height:26px;background:#2e2e2e;"></div>
<svg style="left:1622.0px;top:100.0px;" width="12" height="10" viewBox="0 0 12 10"><path d="M1 1l4 4-4 4M7 1l4 4-4 4" fill="none" stroke="#ccc" stroke-width="1.600"/></svg>
<span class="t" style="left:900px;top:127.0px;font-size:15px;color:#9c9c9c;transform:scaleX(0.9043);">audio-changes</span>
<svg style="left:1008.0px;top:132.0px;" width="6" height="10" viewBox="0 0 6 10"><path d="M5 1L1 5l4 4" fill="none" stroke="#aaa" stroke-width="1.400"/></svg>
<div style="left:1021px;top:127px;width:88px;height:21px;background:#161616;border-radius:2px;box-shadow:0 0 0 1px #2a2a2a;"></div>
<span class="t" style="left:1032px;top:127.0px;font-size:15px;color:#2d8ceb;transform:scaleX(0.8947);">Comp 1</span>
<svg style="left:1098.0px;top:132.0px;" width="6" height="10" viewBox="0 0 6 10"><path d="M5 1L1 5l4 4" fill="none" stroke="#2d8ceb" stroke-width="1.400"/></svg>
<span class="t" style="left:1122px;top:127.0px;font-size:15px;color:#9c9c9c;transform:scaleX(0.9464);">beginning part</span>
<svg style="left:1230.0px;top:132.0px;" width="6" height="10" viewBox="0 0 6 10"><path d="M5 1L1 5l4 4" fill="none" stroke="#aaa" stroke-width="1.400"/></svg>
<span class="t" style="left:1253px;top:127.0px;font-size:15px;color:#9c9c9c;transform:scaleX(0.9213);">delete-soon 2 Comp 1</span>
<svg style="left:1407.0px;top:132.0px;" width="6" height="10" viewBox="0 0 6 10"><path d="M5 1L1 5l4 4" fill="none" stroke="#aaa" stroke-width="1.400"/></svg>
<span class="t" style="left:1430px;top:127.0px;font-size:15px;color:#9c9c9c;transform:scaleX(0.8993);">1st</span>
<svg style="left:1468.0px;top:132.0px;" width="6" height="10" viewBox="0 0 6 10"><path d="M5 1L1 5l4 4" fill="none" stroke="#aaa" stroke-width="1.400"/></svg>
<span class="t" style="left:1491px;top:127.0px;font-size:15px;color:#9c9c9c;transform:scaleX(0.8994);">IMG_9789.MOV Con</span>
<span class="t" style="left:1623px;top:130.0px;font-size:12px;color:#9c9c9c;transform:scaleX(0.9014);">...</span>
<div style="left:866px;top:154px;width:774px;height:2px;background:#1a1a1a;"></div>
<div style="left:870px;top:181px;width:764px;height:429px;background:#ffffff;"></div>
<span class="t" style="left:876px;top:165.0px;font-size:15px;color:#f0f0f0;transform:scaleX(0.9058);text-shadow:0 0 1px #000,1px 1px 0 #000,-1px 0 0 #000,0 1px 0 #000;z-index:3;">Active Camera (Default)</span>
<div style="left:1112px;top:188px;width:18px;height:30px;background:#fafafa;"></div>
<div style="left:1130px;top:188px;width:160px;height:26px;background:#fafafa;"></div>
<div style="left:1108.5px;top:187.5px;width:33px;height:33px;background:#050505;border-radius:50%;"></div>
<span class="t" style="left:1115px;top:193.0px;font-size:8px;color:#fff;transform:scaleX(0.8991);font-style:italic;font-family:'Liberation Serif',serif;filter:blur(0.300px);">Scythe</span>
<span class="t" style="left:1152px;top:186.5px;font-size:13px;color:#1c1c1c;transform:scaleX(0.9681);font-weight:bold;filter:blur(0.350px);">scythe_creates</span>
<span class="t" style="left:1247px;top:186.5px;font-size:13px;color:#6e6e6e;transform:scaleX(1.1259);filter:blur(0.350px);">03/01/25</span>
<svg style="left:1153.5px;top:208.0px;" width="9" height="10" viewBox="0 0 9 10"><path d="M3 1.500l5.500-1v6.500a1.700 1.700 0 1 1-1.200-1.600V2.800L4.200 3.500v5a1.700 1.700 0 1 1-1.200-1.600z" fill="#222"/></svg>
<span class="t" style="left:1169px;top:204.5px;font-size:12px;color:#2c2c2c;transform:scaleX(0.9543);filter:blur(0.350px);">scythe_creates</span>
<div style="left:1366px;top:203px;width:4px;height:4px;background:#111;border-radius:50%;"></div>
<div style="left:1376px;top:203px;width:4px;height:4px;background:#111;border-radius:50%;"></div>
<div style="left:1386px;top:203px;width:4px;height:4px;background:#111;border-radius:50%;"></div>
<svg style="left:1089px;top:227.5px;" width="331" height="303" viewBox="30 25 1053 965"><defs>
<filter id="fol" x="0" y="0" width="100%" height="100%" color-interpolation-filters="sRGB"><feTurbulence type="fractalNoise" baseFrequency="0.045" numOctaves="2" seed="7"/><feColorMatrix type="matrix" values="0.650 0 0 0 0.110  0.650 0 0 0 0.110  0.650 0 0 0 0.110  0 0 0 0 1"/><feGaussianBlur stdDeviation="1.500"/></filter>
<filter id="fol2" x="0" y="0" width="100%" height="100%" color-interpolation-filters="sRGB"><feTurbulence type="fractalNoise" baseFrequency="0.050" numOctaves="2" seed="11"/><feColorMatrix type="matrix" values="0.550 0 0 0 0.030  0.550 0 0 0 0.030  0.550 0 0 0 0.030  0 0 0 0 1"/><feGaussianBlur stdDeviation="1.500"/></filter>
<filter id="gnd" x="0" y="0" width="100%" height="100%" color-interpolation-filters="sRGB"><feTurbulence type="fractalNoise" baseFrequency="0.030 0.080" numOctaves="2" seed="5"/><feColorMatrix type="matrix" values="0.400 0 0 0 0.480  0.400 0 0 0 0.480  0.400 0 0 0 0.480  0 0 0 0 1"/><feGaussianBlur stdDeviation="1.500"/></filter>
<filter id="b4"><feGaussianBlur stdDeviation="5"/></filter>
<filter id="b2"><feGaussianBlur stdDeviation="3"/></filter>
<filter id="b1"><feGaussianBlur stdDeviation="1.600"/></filter>
<linearGradient id="sh" x1="0.300" y1="0" x2="0.500" y2="1"><stop offset="0" stop-color="#505050"/><stop offset="0.300" stop-color="#3a3a3a"/><stop offset="0.600" stop-color="#2a2a2a"/><stop offset="1" stop-color="#232323"/></linearGradient>
<linearGradient id="arm" x1="0" y1="0" x2="1" y2="0"><stop offset="0" stop-color="#5a5a5a"/><stop offset="0.500" stop-color="#747474"/><stop offset="1" stop-color="#4c4c4c"/></linearGradient>
<clipPath id="pc"><rect x="30" y="25" width="1053" height="965"/></clipPath>
<clipPath id="c1"><path d="M30 25h870l40 75-35 40 25 65 80-15 73-22v390H30z"/></clipPath>
<clipPath id="c2"><path d="M850 160l55-20 25 65 80-15 73-22v400H850z"/></clipPath>
</defs>
<g clip-path="url(#pc)">
<rect x="30" y="25" width="1053" height="965" fill="#e9e9e9"/>
<g clip-path="url(#c1)"><rect x="30" y="25" width="1053" height="640" filter="url(#fol)"/></g>
<path d="M905 215l95-22 90-25v440H880V330z" fill="#222" opacity="0.420" filter="url(#b4)"/>
<ellipse cx="820" cy="350" rx="70" ry="110" fill="#a0a0a0" opacity="0.450" filter="url(#b4)"/><ellipse cx="480" cy="330" rx="160" ry="90" fill="#9a9a9a" opacity="0.300" filter="url(#b4)"/><ellipse cx="90" cy="90" rx="170" ry="110" fill="#2a2a2a" opacity="0.350" filter="url(#b4)"/>
<rect x="30" y="598" width="1053" height="392" filter="url(#gnd)"/>
<path d="M30 420h400v210H30z" fill="#4a4a4a" opacity="0.750" filter="url(#b2)"/>
<path d="M60 432h70v14H60zM40 575h115v60H40zM240 560h105v28H240z" fill="#d4d4d4" filter="url(#b1)"/>
<path d="M95 445h22v190H95zM225 583h52v62h-52zM308 585h36v66h-36zM348 568h38v48h-38zM165 470h62v150h-62z" fill="#2e2e2e" filter="url(#b1)"/>
<path d="M1000 545h83v55h-83z" fill="#c4c4c4" filter="url(#b1)"/>
<path d="M1010 560h20v40h-20z" fill="#555" filter="url(#b1)"/>
<path d="M335 990l45-228 92 22-22 118 6 88z" fill="url(#arm)" filter="url(#b1)"/>
<path d="M628 250c-8 30 0 70 10 100l130 10 20-70z" fill="#6c6c6c" filter="url(#b1)"/>
<path d="M600 368l100-42 112 58 92 86 98 136 50 196-10 146-40 42H455l5-142 22-70-122-24 28-178 36-108 78-66z" fill="url(#sh)" filter="url(#b1)"/>
<path d="M600 372l100-44 110 58" fill="none" stroke="#262626" stroke-width="10" filter="url(#b1)"/>
<path d="M362 760l28-178 36-108 40-30 30 120-10 220z" fill="#303030" opacity="0.700" filter="url(#b2)"/>
<path d="M990 870l58 10-6 96-48 14z" fill="#555" filter="url(#b1)"/>
<path d="M985 930h60v35h-60z" fill="#1e1e1e" filter="url(#b1)"/>
<ellipse cx="693" cy="196" rx="106" ry="100" fill="#242424" filter="url(#b2)"/>
<path d="M598 225c4 40 8 95 28 125l30-30-18-95z" fill="#383838" filter="url(#b1)"/>
<path d="M560 585C520 545 455 510 455 462c0-70 80-75 105-28 25-47 105-42 105 28 0 48-65 83-105 123z" fill="#f3f3f3"/>
<path d="M30 640h155c45 0 72 27 72 72v115c0 45-30 72-80 90L30 965z" fill="#ffffff"/>
</g></svg>
<div style="left:1089px;top:227.500px;width:120px;height:303px;overflow:hidden;"><span class="t" style="position:absolute;left:-11px;top:217px;font-size:46px;line-height:60px;font-weight:bold;color:#0a0a0a;transform-origin:0 80%;transform:rotate(-9deg) scaleX(0.700);filter:blur(0.400px);">an?</span></div>
<svg style="left:1111.0px;top:539.5px;" width="22" height="19" viewBox="0 0 22 19"><path d="M11 19C7 15 0 11 0 5.500 0-1.500 8.500-1.500 11 3.500 13.500-1.500 22-1.500 22 5.500 22 11 15 15 11 19z" fill="#ff3b30"/></svg>
<span class="t" style="left:1137px;top:540.0px;font-size:11px;color:#333;transform:scaleX(1.0612);font-weight:bold;filter:blur(0.300px);">83</span>
<svg style="left:1161.0px;top:539.5px;" width="20" height="19" viewBox="0 0 20 19"><path d="M10 1.200a8.300 8.300 0 1 1-4 15.600L17.500 17.800l-1.800-3.600A8.300 8.300 0 0 0 10 1.200a8.300 8.300 0 0 0-4 15.600" fill="none" stroke="#222" stroke-width="1.800"/></svg>
<span class="t" style="left:1186px;top:540.0px;font-size:11px;color:#333;transform:scaleX(0.945);font-weight:bold;filter:blur(0.300px);">11</span>
<svg style="left:1210.5px;top:539.5px;" width="19" height="17" viewBox="0 0 19 17"><path d="M1 1.500h17L9.500 16zM1 1.500l8.500 5.500L18 1.500M9.500 7v9" fill="none" stroke="#222" stroke-width="1.800" stroke-linejoin="round"/></svg>
<span class="t" style="left:1234px;top:540.0px;font-size:11px;color:#333;transform:scaleX(0.9796);font-weight:bold;filter:blur(0.300px);">2</span>
<svg style="left:1378.5px;top:540.0px;" width="15" height="18" viewBox="0 0 15 18"><path d="M1 1h13v16l-6.500-6.500L1 17z" fill="none" stroke="#222" stroke-width="2"/></svg>
<div style="left:1114px;top:563px;width:13px;height:13px;background:#2e2a1c;border-radius:50%;box-shadow:0 0 0 1px #fff;"></div>
<div style="left:1125px;top:563px;width:13px;height:13px;background:#8e96a0;border-radius:50%;box-shadow:0 0 0 1px #fff;"></div>
<div style="left:1136px;top:563px;width:13px;height:13px;background:#cfe2c8;border-radius:50%;box-shadow:0 0 0 1px #fff;"></div>
<span class="t" style="left:1155px;top:559.0px;font-size:11px;color:#777;transform:scaleX(1.015);filter:blur(0.350px);">Liked by <span style="color:#333;text-shadow:0.300px 0 0 #333">imsurya07</span> and others</span>
<span class="t" style="left:1112px;top:576.0px;font-size:12px;color:#222;transform:scaleX(0.9456);font-weight:bold;filter:blur(0.350px);">scythe_creates</span>
<div style="left:866px;top:638px;width:774px;height:1px;background:#1d1d1d;"></div>
<div style="left:872px;top:644px;width:86px;height:22px;background:#1e1e1e;border-radius:3px;box-shadow:0 0 0 1px #303030;"></div>
<span class="t" style="left:879px;top:644.0px;font-size:15px;color:#b9b9b9;transform:scaleX(0.8944);">(39.8%)</span>
<svg style="left:941.0px;top:652.0px;" width="10" height="6" viewBox="0 0 10 6"><path d="M0.800 0.800l4.2 4 4.2-4" fill="none" stroke="#ccc" stroke-width="1.400"/></svg>
<div style="left:964px;top:646px;width:1px;height:18px;background:#383838;"></div>
<div style="left:972px;top:644px;width:107px;height:22px;background:#1e1e1e;border-radius:3px;box-shadow:0 0 0 1px #303030;"></div>
<span class="t" style="left:980px;top:645.0px;font-size:15px;color:#b9b9b9;transform:scaleX(0.995);">Third</span>
<svg style="left:1062.0px;top:652.0px;" width="10" height="6" viewBox="0 0 10 6"><path d="M0.800 0.800l4.2 4 4.2-4" fill="none" stroke="#ccc" stroke-width="1.400"/></svg>
<div style="left:1087px;top:646px;width:1px;height:18px;background:#383838;"></div>
<div style="left:1094px;top:644px;width:25px;height:22px;background:#1b1b1b;border-radius:2px;"></div>
<svg style="left:1097.5px;top:647.0px;" width="17" height="14" viewBox="0 0 17 14"><rect x="0.800" y="0.800" width="15.400" height="12.400" fill="none" stroke="#b4b4b4" stroke-width="1.500"/><path d="M9.500 2.500L5.500 7.500h3L7.500 11.500l4-5h-3z" fill="#b4b4b4"/><path d="M12 12h5l-2.500 3z" fill="#b4b4b4"/></svg>
<svg style="left:1124.5px;top:647.0px;" width="17" height="14" viewBox="0 0 17 14"><rect x="0.800" y="0.800" width="15.400" height="12.400" fill="none" stroke="#b4b4b4" stroke-width="1.500"/><path d="M3 3h3.500v3H3zM10 3h3.500v3H10zM6.500 6H10v3H6.500zM3 9h3.500v2.500H3zM10 9h3.500v2.500H10z" fill="#999"/></svg>
<svg style="left:1152.0px;top:646.0px;" width="18" height="16" viewBox="0 0 18 16"><path d="M2 4l13-2.500v11L2 13z" fill="none" stroke="#b4b4b4" stroke-width="1.500"/><circle cx="2" cy="4" r="1.500" fill="#b4b4b4"/><circle cx="15" cy="1.500" r="1.500" fill="#b4b4b4"/><circle cx="15" cy="12.500" r="1.500" fill="#b4b4b4"/><circle cx="2" cy="13" r="1.500" fill="#b4b4b4"/></svg>
<svg style="left:1180.5px;top:647.0px;" width="17" height="14" viewBox="0 0 17 14"><rect x="0.800" y="0.800" width="15.400" height="12.400" fill="none" stroke="#b4b4b4" stroke-width="1.500"/><rect x="4.500" y="4" width="8" height="6" fill="#b4b4b4"/></svg>
<svg style="left:1207.5px;top:646.0px;" width="17" height="16" viewBox="0 0 17 16"><rect x="0.800" y="1.800" width="15.400" height="10.400" fill="none" stroke="#b4b4b4" stroke-width="1.500"/><path d="M8.500 0v5M8.500 9v5M0 7h4M13 7h4" stroke="#b4b4b4" stroke-width="1.300"/><path d="M11 14h5l-2.500 3z" fill="#b4b4b4"/></svg>
<div style="left:1236px;top:646px;width:1px;height:18px;background:#383838;"></div>
<svg style="left:1248.5px;top:646.5px;" width="15" height="15" viewBox="0 0 15 15"><circle cx="7.500" cy="4.500" r="3.800" fill="#e33"/><circle cx="4.300" cy="9.800" r="3.800" fill="#2c2"/><circle cx="10.700" cy="9.800" r="3.800" fill="#36f"/><path d="M12 13h5l-2.500 3z" fill="#b4b4b4"/></svg>
<svg style="left:1276.0px;top:646.0px;" width="16" height="16" viewBox="0 0 16 16"><circle cx="8" cy="8" r="6.800" fill="none" stroke="#b4b4b4" stroke-width="1.800"/><path d="M8 1l2 6M14.500 5l-5.500 3M13 13l-5-4M4 14.500l3-6M1.200 7l7 1" stroke="#b4b4b4" stroke-width="1.500"/><circle cx="8" cy="8" r="2" fill="#232323"/></svg>
<span class="t" style="left:1300px;top:644.0px;font-size:15px;color:#2d8ceb;transform:scaleX(0.8776);">+0.0</span>
<div style="left:1346px;top:646px;width:1px;height:18px;background:#383838;"></div>
<svg style="left:1357.0px;top:648.0px;" width="18" height="14" viewBox="0 0 18 14"><path d="M0 2.500h4.500L6 0h6l1.500 2.500H18V14H0z" fill="#b4b4b4"/><circle cx="9" cy="8" r="3.600" fill="#232323"/><circle cx="9" cy="8" r="2" fill="#b4b4b4"/></svg>
<svg style="left:1385.0px;top:646.0px;" width="18" height="16" viewBox="0 0 18 16"><ellipse cx="8" cy="9" rx="7" ry="4.500" fill="none" stroke="#444" stroke-width="1.600"/><circle cx="8" cy="9" r="2" fill="#444"/><circle cx="14" cy="4" r="3" fill="none" stroke="#444" stroke-width="1.400"/></svg>
<div style="left:1413px;top:646px;width:1px;height:18px;background:#383838;"></div>
<div style="left:1421px;top:644px;width:85px;height:22px;background:#1e1e1e;border-radius:3px;box-shadow:0 0 0 1px #303030;"></div>
<span class="t" style="left:1431px;top:644.0px;font-size:15px;color:#9c9c9c;transform:scaleX(0.9024);">0:00:02:12</span>
<div style="left:1509px;top:644px;width:96px;height:22px;background:#1e1e1e;border-radius:3px;box-shadow:0 0 0 1px #303030;"></div>
<svg style="left:1516.0px;top:646.0px;" width="20" height="18" viewBox="0 0 20 18"><path d="M7 1l6 3v7l-6 3-6-3V4zM1 4l6 3 6-3M7 7v7" fill="none" stroke="#b4b4b4" stroke-width="1.400"/><path d="M17 7l-5 6h3.500l-1.500 5 5-6.500h-3.500z" fill="#b4b4b4"/></svg>
<span class="t" style="left:1543px;top:645.0px;font-size:15px;color:#9c9c9c;transform:scaleX(0.913);">Draft 3D</span>
<div style="left:1613px;top:646px;width:1px;height:18px;background:#383838;"></div>
<svg style="left:1622.0px;top:648.0px;" width="16" height="12" viewBox="0 0 16 12"><path d="M3 1h10l3 10H0zM8 1v10M1.500 6h13" fill="none" stroke="#444" stroke-width="1.300"/></svg>
<div style="left:1645px;top:88px;width:260px;height:581px;background:#232323;"></div>
<div style="left:1905px;top:88px;width:14px;height:581px;background:#232323;"></div>
<div style="left:1905px;top:90px;width:14px;height:440px;background:#333;border-radius:7px;"></div>
<div style="left:1646px;top:123px;width:257px;height:3px;background:#161616;"></div>
<span class="t" style="left:1661px;top:96.0px;font-size:15px;color:#b0b0b0;transform:scaleX(0.9588);">Info</span>
<div style="left:1646px;top:161px;width:257px;height:3px;background:#161616;"></div>
<span class="t" style="left:1661px;top:134.0px;font-size:15px;color:#b0b0b0;transform:scaleX(0.9646);">Audio</span>
<div style="left:1646px;top:199px;width:257px;height:3px;background:#161616;"></div>
<span class="t" style="left:1661px;top:172.0px;font-size:15px;color:#b0b0b0;transform:scaleX(0.9186);">Preview</span>
<div style="left:1646px;top:237px;width:257px;height:3px;background:#161616;"></div>
<span class="t" style="left:1661px;top:210.0px;font-size:15px;color:#b0b0b0;transform:scaleX(0.8885);">Effects &amp; Presets</span>
<div style="left:1646px;top:275px;width:257px;height:3px;background:#161616;"></div>
<span class="t" style="left:1661px;top:248.0px;font-size:15px;color:#b0b0b0;transform:scaleX(0.9597);">Align</span>
<div style="left:1646px;top:313px;width:257px;height:3px;background:#161616;"></div>
<span class="t" style="left:1661px;top:286.0px;font-size:15px;color:#b0b0b0;transform:scaleX(0.9212);">Libraries</span>
<div style="left:1646px;top:351px;width:257px;height:3px;background:#161616;"></div>
<span class="t" style="left:1661px;top:324.0px;font-size:15px;color:#b0b0b0;transform:scaleX(0.9149);">Tracker</span>
<div style="left:1646px;top:389px;width:257px;height:3px;background:#161616;"></div>
<span class="t" style="left:1661px;top:362.0px;font-size:15px;color:#b0b0b0;transform:scaleX(0.9423);">Content-Aware Fill</span>
<div style="left:1646px;top:427px;width:257px;height:3px;background:#161616;"></div>
<span class="t" style="left:1661px;top:400.0px;font-size:15px;color:#b0b0b0;transform:scaleX(0.9362);">Motion Sketch</span>
<div style="left:1646px;top:465px;width:257px;height:3px;background:#161616;"></div>
<span class="t" style="left:1661px;top:438.0px;font-size:15px;color:#b0b0b0;transform:scaleX(0.8849);">Paragraph</span>
<span class="t" style="left:1661px;top:476.0px;font-size:15px;color:#c8c8c8;transform:scaleX(0.8805);">Character</span>
<div style="left:1645px;top:278px;width:259px;height:38px;background:transparent;border:1px solid #2d6fbd;box-sizing:border-box;"></div>
<svg style="left:1879.0px;top:482.0px;" width="12" height="10" viewBox="0 0 12 10"><path d="M0 1h12M0 5h12M0 9h12" stroke="#b4b4b4" stroke-width="1.500"/></svg>
<div style="left:1651px;top:514px;width:153px;height:22px;background:#1a1a1a;border-radius:4px;box-shadow:0 0 0 1px #333;"></div>
<div style="left:1781px;top:514px;width:1px;height:22px;background:#333;"></div>
<div style="left:1782px;top:515px;width:21px;height:20px;background:#232323;border-radius:0 3px 3px 0;"></div>
<span class="t" style="left:1661px;top:516.0px;font-size:15px;color:#dedede;transform:scaleX(0.9105);">Impact</span>
<svg style="left:1788.0px;top:522.0px;" width="10" height="6" viewBox="0 0 10 6"><path d="M0.800 0.800l4.2 4 4.2-4" fill="none" stroke="#ccc" stroke-width="1.400"/></svg>
<div style="left:1651px;top:544px;width:153px;height:22px;background:#1a1a1a;border-radius:4px;box-shadow:0 0 0 1px #333;"></div>
<div style="left:1781px;top:544px;width:1px;height:22px;background:#333;"></div>
<div style="left:1782px;top:545px;width:21px;height:20px;background:#232323;border-radius:0 3px 3px 0;"></div>
<span class="t" style="left:1661px;top:546.0px;font-size:15px;color:#dedede;transform:scaleX(0.8757);">Regular</span>
<svg style="left:1788.0px;top:552.0px;" width="10" height="6" viewBox="0 0 10 6"><path d="M0.800 0.800l4.2 4 4.2-4" fill="none" stroke="#ccc" stroke-width="1.400"/></svg>
<svg style="left:1812.0px;top:516.0px;" width="22" height="22" viewBox="0 0 22 22"><path d="M15 1.500a3 3 0 0 1 5 4l-3 3 1 1-1.500 1.500-5.500-5.500L12.500 4l1 1z" fill="#b4b4b4"/><path d="M12 8.500L3 17.500l-1.500 3 3-1.500 9-9" fill="none" stroke="#b4b4b4" stroke-width="1.500"/></svg>
<div style="left:1858px;top:530px;width:37px;height:37px;background:#fff;border:1px solid #000;box-sizing:border-box;"></div>
<div style="left:1868px;top:540px;width:16px;height:16px;background:#1a1a1a;"></div>
<svg style="left:1858px;top:530px;" width="37" height="37" viewBox="0 0 37 37"><path d="M1 36L36 1" stroke="#e01010" stroke-width="2"/></svg>
<div style="left:1841px;top:514px;width:37px;height:36px;background:#fff;border:1px solid #000;box-sizing:border-box;"></div>
<svg style="left:1880.0px;top:516.0px;" width="14" height="14" viewBox="0 0 14 14"><path d="M3 3h4a5 5 0 0 1 5 5v3" fill="none" stroke="#b4b4b4" stroke-width="2"/><path d="M0 3l4.500-3v6zM12 14l-3-4.500h6z" fill="#b4b4b4"/></svg>
<div style="left:1810px;top:546px;width:26px;height:21px;background:#fff;border:1px solid #8a8a8a;box-sizing:border-box;"></div>
<div style="left:1811px;top:547px;width:24px;height:9px;background:#000;"></div>
<div style="left:1842px;top:551px;width:15px;height:15px;background:#fff;border:1px solid #8a8a8a;box-sizing:border-box;"></div>
<svg style="left:1842px;top:551px;" width="15" height="15" viewBox="0 0 15 15"><path d="M1.500 13.500L13.500 1.500" stroke="#e01010" stroke-width="1.200"/></svg>
<div style="left:1651px;top:574px;width:244px;height:1px;background:#2e2e2e;"></div>
<span class="t" style="left:1650px;top:581.0px;font-size:15px;color:#b4b4b4;transform:scaleX(0.9);font-weight:bold;font-family:'Liberation Serif',serif;">T</span>
<span class="t" style="left:1659px;top:578.0px;font-size:23px;color:#b4b4b4;transform:scaleX(0.9);font-weight:bold;font-family:'Liberation Serif',serif;">T</span>
<span class="t" style="left:1682px;top:580.0px;font-size:15px;color:#2d8ceb;transform:scaleX(0.93);">70 <span style="color:#9a9a9a">px</span></span>
<svg style="left:1737.5px;top:586.0px;" width="9" height="8" viewBox="0 0 9 8"><path d="M0 0h9L4.500 8z" fill="#9a9a9a"/></svg>
<svg style="left:1783.0px;top:581.0px;" width="22" height="24" viewBox="0 0 22 24"><path d="M3 8v10M3 7l-3 4h6zM3 20l-3-4h6z" fill="#b4b4b4" stroke="#b4b4b4" stroke-width="1"/><path d="M10 9l3.500-8 3.500 8M11.300 6.500h4.400M9 10.500h9" fill="none" stroke="#b4b4b4" stroke-width="1.300"/><path d="M10 21l3.500-8 3.500 8M11.300 18.500h4.400M9 22.500h9" fill="none" stroke="#b4b4b4" stroke-width="1.300"/></svg>
<span class="t" style="left:1822px;top:580.0px;font-size:15px;color:#2d8ceb;transform:scaleX(0.93);">25 <span style="color:#9a9a9a">px</span></span>
<svg style="left:1879.5px;top:586.0px;" width="9" height="8" viewBox="0 0 9 8"><path d="M0 0h9L4.500 8z" fill="#9a9a9a"/></svg>
<svg style="left:1650.0px;top:608.0px;" width="24" height="22" viewBox="0 0 24 22"><path d="M0 0l5 12 5-12M9 12l5-12 5 12M11 8h6" fill="none" stroke="#b4b4b4" stroke-width="1.600" transform="translate(0,1)"/><path d="M11 1L8 13" stroke="#b4b4b4" stroke-width="1.200"/><path d="M12 19h9M12 19l3.500-2.500v5z" fill="#b4b4b4" stroke="#b4b4b4" stroke-width="1.200"/></svg>
<span class="t" style="left:1683px;top:606.0px;font-size:15px;color:#4a4a4a;transform:scaleX(0.9101);">Metrics</span>
<svg style="left:1737.5px;top:612.0px;" width="9" height="8" viewBox="0 0 9 8"><path d="M0 0h9L4.500 8z" fill="#9a9a9a"/></svg>
<div style="left:1785px;top:608px;width:23px;height:15px;background:#b4b4b4;"></div>
<span class="t" style="left:1786px;top:605.5px;font-size:13px;color:#1a1a1a;transform:scaleX(1.2285);font-weight:bold;">VA</span>
<svg style="left:1785.0px;top:623.5px;" width="22" height="7" viewBox="0 0 22 7"><path d="M2 3.500h18M0 3.500l4-3v6zM22 3.500l-4-3v6z" fill="#b4b4b4" stroke="#b4b4b4" stroke-width="1"/></svg>
<span class="t" style="left:1822px;top:605.0px;font-size:15px;color:#2d8ceb;transform:scaleX(0.91);">0</span>
<svg style="left:1879.5px;top:612.0px;" width="9" height="8" viewBox="0 0 9 8"><path d="M0 0h9L4.500 8z" fill="#9a9a9a"/></svg>
<div style="left:1651px;top:636px;width:244px;height:1px;background:#2e2e2e;"></div>
<div style="left:1654px;top:648px;width:18px;height:3px;background:#b4b4b4;border-radius:1px;"></div>
<div style="left:1654px;top:653px;width:18px;height:3px;background:#b4b4b4;border-radius:1px;"></div>
<div style="left:1654px;top:658px;width:18px;height:3px;background:#b4b4b4;border-radius:1px;"></div>
<span class="t" style="left:1683px;top:645.0px;font-size:15px;color:#2d8ceb;transform:scaleX(0.91);">- <span style="color:#9a9a9a;margin-left:3px">px</span></span>
<svg style="left:1737.5px;top:650.0px;" width="9" height="8" viewBox="0 0 9 8"><path d="M0 0h9L4.500 8z" fill="#9a9a9a"/></svg>
<div style="left:1753px;top:644px;width:143px;height:22px;background:#1c1c1c;border-radius:4px;box-shadow:0 0 0 1px #303030;"></div>
<svg style="left:1879.0px;top:652.0px;" width="10" height="6" viewBox="0 0 10 6"><path d="M0.800 0.800l4.2 4 4.2-4" fill="none" stroke="#ccc" stroke-width="1.400"/></svg>
<div style="left:1px;top:674px;width:1918px;height:345px;background:#2d8ceb;"></div>
<div style="left:2px;top:675px;width:1916px;height:343px;background:#232323;"></div>
<svg style="left:13.5px;top:688.5px;" width="7" height="7" viewBox="0 0 7 7"><path d="M0.500 0.500l6 6M6.500 0.500l-6 6" stroke="#9a9a9a" stroke-width="1.200"/></svg>
<div style="left:33px;top:684px;width:13px;height:13px;background:#b5a07a;"></div>
<span class="t" style="left:61px;top:682.0px;font-size:15px;color:#cfcfcf;transform:scaleX(0.8947);">Comp 1</span>
<svg style="left:120.5px;top:687.0px;" width="11" height="10" viewBox="0 0 11 10"><path d="M0 1h11M0 5h11M0 9h11" stroke="#ccc" stroke-width="1.500"/></svg>
<div style="left:13px;top:704px;width:119px;height:2px;background:#d0d0d0;"></div>
<span class="t" style="left:179px;top:682.0px;font-size:15px;color:#9c9c9c;transform:scaleX(0.8839);">Render Queue</span>
<div style="left:337px;top:684px;width:13px;height:13px;background:#b5a07a;"></div>
<span class="t" style="left:364px;top:682.0px;font-size:15px;color:#9c9c9c;transform:scaleX(0.9464);">beginning part</span>
<span class="t" style="left:23px;top:712.5px;font-size:20px;color:#2d8ceb;transform:scaleX(0.9403);font-weight:bold;">0:00:02:12</span>
<span class="t" style="left:15px;top:733.0px;font-size:13px;color:#2767ad;transform:scaleX(0.9526);">00072 (29.980 fps)</span>
<div style="left:140px;top:718px;width:480px;height:24px;background:#161616;border-radius:3px;box-shadow:0 0 0 1px #2c2c2c;"></div>
<svg style="left:150.0px;top:724.0px;" width="20" height="14" viewBox="0 0 20 14"><circle cx="8" cy="5.500" r="4.200" fill="none" stroke="#b4b4b4" stroke-width="1.500"/><path d="M5 8.500L0.500 13" stroke="#b4b4b4" stroke-width="1.600"/><path d="M13.500 9h6l-3 3z" fill="#b4b4b4"/></svg>
<svg style="left:639.5px;top:723.0px;" width="23" height="17" viewBox="0 0 23 17"><rect x="0" y="1" width="9" height="4" rx="1" fill="#b4b4b4"/><rect x="15" y="1" width="5.500" height="4" rx="1" fill="#b4b4b4"/><rect x="15" y="7.500" width="5.500" height="4" rx="1" fill="#b4b4b4"/><path d="M9 3h6M12 3v6.500h3" fill="none" stroke="#b4b4b4" stroke-width="1.200"/><path d="M17 13.500h6l-3 3z" fill="#b4b4b4"/></svg>
<svg style="left:681.5px;top:722.0px;" width="22" height="16" viewBox="0 0 22 16"><rect x="0" y="10" width="22" height="6" fill="#7c7c7c"/><path d="M3 9.500a8 8 0 0 1 16 0z" fill="#b4b4b4"/><path d="M1 9.500h20" stroke="#b4b4b4" stroke-width="1.400"/><rect x="9.700" y="8" width="2.600" height="6" fill="#b4b4b4"/><circle cx="8.500" cy="5.500" r="1.500" fill="#232323"/><circle cx="13.500" cy="5.500" r="1.500" fill="#232323"/></svg>
<svg style="left:716.5px;top:721.5px;" width="19" height="18" viewBox="0 0 19 18"><rect x="0.500" y="4.500" width="12" height="13" rx="1" fill="#9a9a9a"/><rect x="6" y="0" width="13" height="14" rx="1" fill="#b4b4b4" stroke="#232323" stroke-width="0.800"/><path d="M7.800 1.500v11M17.200 1.500v11" stroke="#3a3a3a" stroke-width="1.200" stroke-dasharray="1.300 1.500"/><path d="M10.500 6.800h4" stroke="#3a3a3a" stroke-width="1.400"/><path d="M2 6v10" stroke="#3a3a3a" stroke-width="1.200" stroke-dasharray="1.300 1.500"/></svg>
<svg style="left:748.5px;top:721.0px;" width="19" height="19" viewBox="0 0 19 19"><circle cx="6.500" cy="12.500" r="5.700" fill="#232323" stroke="#2d8ceb" stroke-width="1.400"/><circle cx="8.500" cy="10.500" r="5.700" fill="#232323" stroke="#2d8ceb" stroke-width="1.400"/><circle cx="10.500" cy="8.500" r="5.700" fill="#232323" stroke="#2d8ceb" stroke-width="1.400"/><circle cx="12.500" cy="6.500" r="5.700" fill="#1d5fa8" stroke="#2d8ceb" stroke-width="1.400"/></svg>
<svg style="left:790.0px;top:721.0px;" width="21" height="19" viewBox="0 0 21 19"><rect x="2" y="3" width="18" height="15" fill="none" stroke="#b4b4b4" stroke-width="1.500"/><path d="M4.500 6.500c5 0 5.500 8 12.500 8.500" fill="none" stroke="#b4b4b4" stroke-width="1.300"/><path d="M6 0v3M10 0v3M14 0v3M18 0v3M0 7h2M0 11h2M0 15h2" stroke="#b4b4b4" stroke-width="1.100"/></svg>
<div style="left:2px;top:753px;width:828px;height:1px;background:#0c0c0c;"></div>
<div style="left:2px;top:754px;width:828px;height:23px;background:#2f2f2f;"></div>
<div style="left:2px;top:777px;width:828px;height:1px;background:#0c0c0c;"></div>
<svg style="left:6.5px;top:761.5px;" width="17" height="11" viewBox="0 0 17 11"><path d="M0.500 5.500C4 0 13 0 16.500 5.500 13 11 4 11 0.500 5.500z" fill="#d0d0d0"/><circle cx="8.500" cy="5.500" r="3.300" fill="#1c1c1c"/><circle cx="8.500" cy="5.500" r="1.600" fill="#d0d0d0"/></svg>
<svg style="left:26.5px;top:760.0px;" width="15" height="14" viewBox="0 0 15 14"><path d="M0 4.500h3.500L8 0.500v13L3.500 9.500H0z" fill="#b4b4b4"/><path d="M10.500 3.500a5 5 0 0 1 0 7M12.500 1.500a8 8 0 0 1 0 11" fill="none" stroke="#b4b4b4" stroke-width="1.300"/></svg>
<div style="left:49px;top:763px;width:9px;height:9px;background:#b4b4b4;border-radius:50%;"></div>
<svg style="left:66.0px;top:758.5px;" width="12" height="15" viewBox="0 0 12 15"><rect x="0" y="6.500" width="12" height="8.500" rx="1" fill="#b4b4b4"/><path d="M2.500 7V4.500a3.500 3.500 0 0 1 7 0V7" fill="none" stroke="#b4b4b4" stroke-width="1.700"/><rect x="5" y="9" width="2" height="3.500" fill="#222"/></svg>
<div style="left:88px;top:760px;width:1px;height:15px;background:#1a1a1a;"></div>
<div style="left:126px;top:760px;width:1px;height:15px;background:#1a1a1a;"></div>
<div style="left:158px;top:760px;width:1px;height:15px;background:#1a1a1a;"></div>
<svg style="left:103.0px;top:758.5px;" width="16" height="15" viewBox="0 0 16 15"><path d="M0.500 1.500l6-1 8.500 8.500-5.500 5.500L1 6zM3 3.500a1.200 1.200 0 1 0 .1 0z" fill="#b4b4b4" fill-rule="evenodd"/></svg>
<span class="t" style="left:134px;top:757.0px;font-size:12px;color:#a8a8a8;transform:scaleX(0.91);">#</span>
<span class="t" style="left:167px;top:757.0px;font-size:13px;color:#a8a8a8;transform:scaleX(0.8612);">Layer Name</span>
<div style="left:416px;top:760px;width:1px;height:15px;background:#1a1a1a;"></div>
<svg style="left:422.0px;top:760.5px;" width="16" height="13" viewBox="0 0 16 13"><path d="M3 8.500V6a5 5 0 0 1 10 0v2.500z" fill="#b4b4b4"/><path d="M0 9.500h16" stroke="#b4b4b4" stroke-width="1.300"/><path d="M5 10.500v2M8 10.500v2.500M11 10.500v2" stroke="#b4b4b4" stroke-width="1.300"/><path d="M6 4v3M10 4v3" stroke="#232323" stroke-width="1.200"/></svg>
<svg style="left:442.5px;top:760.5px;" width="13" height="13" viewBox="0 0 13 13"><circle cx="6.500" cy="6.500" r="2.500" fill="none" stroke="#b4b4b4" stroke-width="1.400"/><path d="M6.500 0v2.500M6.500 10.500V13M0 6.500h2.500M10.500 6.500H13M2 2l1.800 1.800M9.200 9.200L11 11M11 2L9.200 3.800M3.800 9.200L2 11" stroke="#b4b4b4" stroke-width="1.300"/></svg>
<svg style="left:460.5px;top:761.5px;" width="13" height="11" viewBox="0 0 13 11"><path d="M0.500 0.500l12 10" stroke="#b4b4b4" stroke-width="2" stroke-dasharray="2 1.500"/></svg>
<span class="t" style="left:478px;top:757.0px;font-size:16px;color:#c8c8c8;transform:scaleX(0.9);font-style:italic;">fx</span>
<svg style="left:497.5px;top:760.5px;" width="15" height="13" viewBox="0 0 15 13"><rect width="15" height="13" rx="1" fill="#b4b4b4"/><rect x="3.500" y="2" width="8" height="9" fill="#555"/><path d="M1.700 1.500v10M13.300 1.500v10" stroke="#232323" stroke-width="1.200" stroke-dasharray="1.500 1.500"/></svg>
<svg style="left:516.0px;top:759.5px;" width="16" height="15" viewBox="0 0 16 15"><circle cx="5.500" cy="10" r="4.500" fill="none" stroke="#b4b4b4" stroke-width="1.200"/><circle cx="7.500" cy="8" r="4.500" fill="none" stroke="#b4b4b4" stroke-width="1.200"/><circle cx="10" cy="5.500" r="5" fill="#8a8a8a"/></svg>
<svg style="left:536.5px;top:760.5px;" width="13" height="13" viewBox="0 0 13 13"><circle cx="6.500" cy="6.500" r="6" fill="#b4b4b4"/><path d="M2.300 10.700A6 6 0 0 0 10.700 2.300z" fill="#2a2a2a"/></svg>
<svg style="left:556.5px;top:760.0px;" width="13" height="14" viewBox="0 0 13 14"><path d="M6.500 0.800l5.500 3v6.400l-5.500 3-5.500-3V3.800zM1 3.800l5.500 3 5.500-3M6.500 6.800v6.400" fill="none" stroke="#b4b4b4" stroke-width="1.300"/></svg>
<div style="left:583px;top:759px;width:1px;height:15px;background:#1a1a1a;"></div>
<div style="left:733px;top:759px;width:1px;height:15px;background:#1a1a1a;"></div>
<div style="left:810px;top:759px;width:1px;height:15px;background:#1a1a1a;"></div>
<span class="t" style="left:595px;top:757.0px;font-size:13px;color:#a8a8a8;transform:scaleX(0.8711);">Parent &amp; Link</span>
<span class="t" style="left:741px;top:757.0px;font-size:13px;color:#a8a8a8;transform:scaleX(0.8498);">Stretch</span>
<div style="left:2px;top:799px;width:828px;height:21px;background:#2b2b2b;"></div>
<div style="left:2px;top:820px;width:828px;height:21px;background:#2b2b2b;"></div>
<div style="left:2px;top:841px;width:828px;height:22px;background:#2b2b2b;"></div>
<div style="left:2px;top:863px;width:828px;height:21px;background:#2b2b2b;"></div>
<div style="left:2px;top:884px;width:828px;height:21px;background:#2b2b2b;"></div>
<div style="left:2px;top:969px;width:828px;height:21px;background:#2b2b2b;"></div>
<div style="left:2px;top:798px;width:828px;height:1px;background:#1e1e1e;"></div>
<div style="left:2px;top:819px;width:828px;height:1px;background:#1e1e1e;"></div>
<div style="left:2px;top:840px;width:828px;height:1px;background:#1e1e1e;"></div>
<div style="left:2px;top:862px;width:828px;height:1px;background:#1e1e1e;"></div>
<div style="left:2px;top:883px;width:828px;height:1px;background:#1e1e1e;"></div>
<div style="left:2px;top:904px;width:828px;height:1px;background:#1e1e1e;"></div>
<div style="left:2px;top:925px;width:828px;height:1px;background:#1e1e1e;"></div>
<div style="left:2px;top:947px;width:828px;height:1px;background:#1e1e1e;"></div>
<div style="left:2px;top:968px;width:828px;height:1px;background:#1e1e1e;"></div>
<div style="left:2px;top:989px;width:828px;height:1px;background:#1e1e1e;"></div>
<div style="left:2px;top:1011px;width:828px;height:1px;background:#1e1e1e;"></div>
<svg style="left:10.5px;top:783.0px;" width="7" height="10" viewBox="0 0 7 10"><path d="M7 0v10L0 5z" fill="#4a4a4a"/></svg>
<svg style="left:28.5px;top:782.5px;" width="11" height="11" viewBox="0 0 11 11"><path d="M5.500 0.800L10.200 5.500 5.500 10.200 0.800 5.500z" fill="none" stroke="#b4b4b4" stroke-width="1.300"/></svg>
<svg style="left:50.0px;top:782.5px;" width="8" height="11" viewBox="0 0 8 11"><path d="M0 0v11l8-5.500z" fill="#c4c4c4"/></svg>
<div style="left:147px;top:787px;width:2px;height:2px;background:#444;"></div>
<div style="left:150px;top:778px;width:20px;height:20px;background:#1e1e1e;border-radius:2px;"></div>
<svg style="left:152.5px;top:779.0px;" width="15" height="17" viewBox="0 0 15 17"><circle cx="7.500" cy="10" r="6" fill="none" stroke="#2d8ceb" stroke-width="1.600"/><path d="M5 1h5M7.500 1v3M7.500 10l3-3.500" stroke="#2d8ceb" stroke-width="1.500" fill="none"/></svg>
<svg style="left:176.5px;top:781.5px;" width="15" height="13" viewBox="0 0 15 13"><path d="M1 0v12h14" fill="none" stroke="#b4b4b4" stroke-width="1.500"/><path d="M3 9l3-5 3 3 4-3" fill="none" stroke="#b4b4b4" stroke-width="1.300"/></svg>
<span class="t" style="left:199px;top:780.0px;font-size:15px;color:#b9b9b9;transform:scaleX(0.853);">Scale</span>
<div style="left:421px;top:778px;width:18px;height:19px;background:#1e1e1e;"></div>
<svg style="left:423.0px;top:784.0px;" width="14" height="8" viewBox="0 0 14 8"><path d="M5.500 4h3" stroke="#b4b4b4" stroke-width="1.600"/><rect x="0.800" y="1" width="6" height="6" rx="3" fill="none" stroke="#b4b4b4" stroke-width="1.500"/><rect x="7.200" y="1" width="6" height="6" rx="3" fill="none" stroke="#b4b4b4" stroke-width="1.500"/></svg>
<span class="t" style="left:444px;top:777.0px;font-size:15px;color:#2d8ceb;transform:scaleX(0.89);">234.0,234.0<span style="color:#999;margin-left:2px">%</span></span>
<svg style="left:610.5px;top:780.5px;" width="15" height="15" viewBox="0 0 15 15"><path d="M8.500 7.500a1.500 1.500 0 1 0-2 1.500 3.500 3.500 0 1 0 4-5.500 5.800 5.800 0 1 0 2.800 7.500" fill="none" stroke="#c0c0c0" stroke-width="1.400" transform="rotate(150 7.500 7.500)"/></svg>
<div style="left:7px;top:801px;width:17px;height:17px;background:#1d1d1d;"></div>
<div style="left:45px;top:801px;width:17px;height:17px;background:#1d1d1d;"></div>
<div style="left:64px;top:801px;width:17px;height:17px;background:#1d1d1d;"></div>
<div style="left:45px;top:801px;width:17px;height:17px;background:#2b2b2b;"></div>
<svg style="left:66.0px;top:801.3px;" width="12" height="15" viewBox="0 0 12 15"><rect x="0" y="6.500" width="12" height="8.500" rx="1" fill="#c4c4c4"/><path d="M2.500 7V4.500a3.500 3.500 0 0 1 7 0V7" fill="none" stroke="#c4c4c4" stroke-width="1.700"/><rect x="5" y="9" width="2" height="3.500" fill="#222"/></svg>
<svg style="left:93.0px;top:805.3px;" width="6" height="10" viewBox="0 0 6 10"><path d="M1 1l4 4-4 4" fill="none" stroke="#aaa" stroke-width="1.400"/></svg>
<div style="left:108px;top:801px;width:15px;height:15px;background:#a9d0cb;"></div>
<span class="t" style="left:134px;top:798.6px;font-size:15px;color:#c2c2c2;transform:scaleX(0.8989);-webkit-text-stroke:0.450px #c2c2c2;">21</span>
<svg style="left:162px;top:802px;" width="20" height="16" viewBox="0 0 18 15"><rect x="0" y="0" width="18" height="15" rx="1" fill="#b8b8b8"/><rect x="2.500" y="2" width="13" height="9.500" fill="#3c3c3c"/><path d="M0.800 1.500h1M0.800 4h1M0.800 6.500h1M0.800 9h1M0.800 11.500h1M16.200 1.500h1M16.200 4h1M16.200 6.500h1M16.200 9h1M16.200 11.500h1" stroke="#333" stroke-width="1.200"/><circle cx="6.500" cy="5.500" r="2.600" fill="#3b8ee8"/><rect x="9.500" y="4" width="5" height="5" fill="#e23b3b"/><path d="M8.500 5.500l3.500 6h-7z" fill="#2aa44a"/><rect x="2" y="12.800" width="14" height="1.200" fill="#444"/></svg>
<div style="left:185px;top:802px;width:16px;height:16px;background:#1a1a1a;border:1.500px solid #b4b4b4;box-sizing:border-box;border-radius:1px;"></div>
<div style="left:189px;top:806px;width:8px;height:8px;background:#c8c8c8;border-radius:50%;"></div>
<span class="t" style="left:208px;top:799.3px;font-size:15px;color:#c6c6c6;transform:scaleX(1.0119);-webkit-text-stroke:0.450px #c6c6c6;">[white-precomp]</span>
<svg style="left:422.0px;top:802.8px;" width="16" height="13" viewBox="0 0 16 13"><path d="M3 8.500V6a5 5 0 0 1 10 0v2.500z" fill="#b4b4b4"/><path d="M0 9.500h16" stroke="#b4b4b4" stroke-width="1.300"/><path d="M5 10.500v2M8 10.500v2.500M11 10.500v2" stroke="#b4b4b4" stroke-width="1.300"/><path d="M6 4v3M10 4v3" stroke="#232323" stroke-width="1.200"/></svg>
<div style="left:441px;top:801px;width:16px;height:17px;background:#1d1d1d;"></div>
<div style="left:516px;top:801px;width:16px;height:17px;background:#1d1d1d;"></div>
<div style="left:535px;top:801px;width:16px;height:17px;background:#1d1d1d;"></div>
<div style="left:553px;top:801px;width:16px;height:17px;background:#1d1d1d;"></div>
<svg style="left:460.0px;top:802.3px;" width="14" height="14" viewBox="0 0 14 14"><path d="M1 13L13 1" stroke="#c4c4c4" stroke-width="1.500"/></svg>
<span class="t" style="left:480px;top:798.8px;font-size:16px;color:#d0d0d0;transform:scaleX(0.9);font-style:italic;">fx</span>
<div style="left:535px;top:801px;width:16px;height:17px;background:#2b2b2b;"></div>
<svg style="left:594.5px;top:801.8px;" width="15" height="15" viewBox="0 0 15 15"><path d="M8.500 7.500a1.500 1.500 0 1 0-2 1.500 3.500 3.500 0 1 0 4-5.500 5.800 5.800 0 1 0 2.800 7.500" fill="none" stroke="#c0c0c0" stroke-width="1.400" transform="rotate(150 7.500 7.500)"/></svg>
<div style="left:617px;top:801px;width:111px;height:17px;background:#1a1a1a;border-radius:2px;"></div>
<span class="t" style="left:625px;top:799.8px;font-size:15px;color:#d0d0d0;transform:scaleX(0.9203);">None</span>
<svg style="left:712.5px;top:806.3px;" width="9" height="6" viewBox="0 0 9 6"><path d="M0.800 0.800l3.7 4 3.7-4" fill="none" stroke="#ccc" stroke-width="1.400"/></svg>
<span class="t" style="left:743px;top:798.3px;font-size:15px;color:#2d8ceb;transform:scaleX(0.9039);">100.0%</span>
<div style="left:7px;top:823px;width:17px;height:17px;background:#1d1d1d;"></div>
<div style="left:45px;top:823px;width:17px;height:17px;background:#1d1d1d;"></div>
<div style="left:64px;top:823px;width:17px;height:17px;background:#1d1d1d;"></div>
<svg style="left:7.0px;top:825.6px;" width="17" height="11" viewBox="0 0 17 11"><path d="M0.500 5.500C4 0 13 0 16.500 5.500 13 11 4 11 0.500 5.500z" fill="#d0d0d0"/><circle cx="8.500" cy="5.500" r="3.300" fill="#1c1c1c"/><circle cx="8.500" cy="5.500" r="1.600" fill="#d0d0d0"/></svg>
<svg style="left:66.0px;top:822.6px;" width="12" height="15" viewBox="0 0 12 15"><rect x="0" y="6.500" width="12" height="8.500" rx="1" fill="#c4c4c4"/><path d="M2.500 7V4.500a3.500 3.500 0 0 1 7 0V7" fill="none" stroke="#c4c4c4" stroke-width="1.700"/><rect x="5" y="9" width="2" height="3.500" fill="#222"/></svg>
<svg style="left:93.0px;top:826.6px;" width="6" height="10" viewBox="0 0 6 10"><path d="M1 1l4 4-4 4" fill="none" stroke="#aaa" stroke-width="1.400"/></svg>
<div style="left:108px;top:823px;width:15px;height:15px;background:#a9d0cb;"></div>
<span class="t" style="left:134px;top:819.9px;font-size:15px;color:#c2c2c2;transform:scaleX(0.8989);-webkit-text-stroke:0.450px #c2c2c2;">22</span>
<svg style="left:162px;top:824px;" width="20" height="16" viewBox="0 0 18 15"><rect x="0" y="0" width="18" height="15" rx="1" fill="#b8b8b8"/><rect x="2.500" y="2" width="13" height="9.500" fill="#3c3c3c"/><path d="M0.800 1.500h1M0.800 4h1M0.800 6.500h1M0.800 9h1M0.800 11.500h1M16.200 1.500h1M16.200 4h1M16.200 6.500h1M16.200 9h1M16.200 11.500h1" stroke="#333" stroke-width="1.200"/><circle cx="6.500" cy="5.500" r="2.600" fill="#3b8ee8"/><rect x="9.500" y="4" width="5" height="5" fill="#e23b3b"/><path d="M8.500 5.500l3.500 6h-7z" fill="#2aa44a"/><rect x="2" y="12.800" width="14" height="1.200" fill="#444"/></svg>
<div style="left:185px;top:824px;width:16px;height:16px;background:#3a3a3a;border:1.500px solid #888;box-sizing:border-box;border-radius:1px;"></div>
<svg style="left:188.0px;top:826.6px;" width="10" height="10" viewBox="0 0 10 10"><circle cx="5" cy="5" r="4" fill="#222" stroke="#777" stroke-width="1"/></svg>
<span class="t" style="left:208px;top:820.6px;font-size:15px;color:#c6c6c6;transform:scaleX(1.005);-webkit-text-stroke:0.450px #c6c6c6;">[fatality-seedhe-maut]</span>
<svg style="left:422.0px;top:824.1px;" width="16" height="13" viewBox="0 0 16 13"><path d="M3 8.500V6a5 5 0 0 1 10 0v2.500z" fill="#b4b4b4"/><path d="M0 9.500h16" stroke="#b4b4b4" stroke-width="1.300"/><path d="M5 10.500v2M8 10.500v2.500M11 10.500v2" stroke="#b4b4b4" stroke-width="1.300"/><path d="M6 4v3M10 4v3" stroke="#232323" stroke-width="1.200"/></svg>
<div style="left:441px;top:823px;width:16px;height:17px;background:#1d1d1d;"></div>
<div style="left:516px;top:823px;width:16px;height:17px;background:#1d1d1d;"></div>
<div style="left:535px;top:823px;width:16px;height:17px;background:#1d1d1d;"></div>
<div style="left:553px;top:823px;width:16px;height:17px;background:#1d1d1d;"></div>
<svg style="left:460.0px;top:823.6px;" width="14" height="14" viewBox="0 0 14 14"><path d="M1 13L13 1" stroke="#c4c4c4" stroke-width="1.500"/></svg>
<svg style="left:594.5px;top:823.1px;" width="15" height="15" viewBox="0 0 15 15"><path d="M8.500 7.500a1.500 1.500 0 1 0-2 1.500 3.500 3.500 0 1 0 4-5.500 5.800 5.800 0 1 0 2.800 7.500" fill="none" stroke="#c0c0c0" stroke-width="1.400" transform="rotate(150 7.500 7.500)"/></svg>
<div style="left:617px;top:823px;width:111px;height:17px;background:#1a1a1a;border-radius:2px;"></div>
<span class="t" style="left:625px;top:821.1px;font-size:15px;color:#d0d0d0;transform:scaleX(0.9203);">None</span>
<svg style="left:712.5px;top:827.6px;" width="9" height="6" viewBox="0 0 9 6"><path d="M0.800 0.800l3.7 4 3.7-4" fill="none" stroke="#ccc" stroke-width="1.400"/></svg>
<span class="t" style="left:743px;top:819.6px;font-size:15px;color:#2d8ceb;transform:scaleX(0.9039);">100.0%</span>
<div style="left:7px;top:844px;width:17px;height:17px;background:#1d1d1d;"></div>
<div style="left:45px;top:844px;width:17px;height:17px;background:#1d1d1d;"></div>
<div style="left:64px;top:844px;width:17px;height:17px;background:#1d1d1d;"></div>
<svg style="left:7.0px;top:846.9px;" width="17" height="11" viewBox="0 0 17 11"><path d="M0.500 5.500C4 0 13 0 16.500 5.500 13 11 4 11 0.500 5.500z" fill="#d0d0d0"/><circle cx="8.500" cy="5.500" r="3.300" fill="#1c1c1c"/><circle cx="8.500" cy="5.500" r="1.600" fill="#d0d0d0"/></svg>
<svg style="left:93.0px;top:847.9px;" width="6" height="10" viewBox="0 0 6 10"><path d="M1 1l4 4-4 4" fill="none" stroke="#aaa" stroke-width="1.400"/></svg>
<div style="left:108px;top:844px;width:15px;height:15px;background:#b53a3a;"></div>
<span class="t" style="left:134px;top:841.2px;font-size:15px;color:#c2c2c2;transform:scaleX(0.8989);-webkit-text-stroke:0.450px #c2c2c2;">23</span>
<div style="left:164px;top:844px;width:17px;height:16px;background:#fff;border-radius:2px;box-shadow:0 0 0 1px #111;"></div>
<span class="t" style="left:189px;top:841.9px;font-size:15px;color:#c6c6c6;transform:scaleX(0.9822);-webkit-text-stroke:0.450px #c6c6c6;">[White Solid 6]</span>
<svg style="left:422.0px;top:845.4px;" width="16" height="13" viewBox="0 0 16 13"><path d="M3 8.500V6a5 5 0 0 1 10 0v2.500z" fill="#b4b4b4"/><path d="M0 9.500h16" stroke="#b4b4b4" stroke-width="1.300"/><path d="M5 10.500v2M8 10.500v2.500M11 10.500v2" stroke="#b4b4b4" stroke-width="1.300"/><path d="M6 4v3M10 4v3" stroke="#232323" stroke-width="1.200"/></svg>
<div style="left:441px;top:844px;width:16px;height:17px;background:#1d1d1d;"></div>
<div style="left:516px;top:844px;width:16px;height:17px;background:#1d1d1d;"></div>
<div style="left:535px;top:844px;width:16px;height:17px;background:#1d1d1d;"></div>
<div style="left:553px;top:844px;width:16px;height:17px;background:#1d1d1d;"></div>
<svg style="left:460.0px;top:844.9px;" width="14" height="14" viewBox="0 0 14 14"><path d="M1 13L13 1" stroke="#c4c4c4" stroke-width="1.500"/></svg>
<span class="t" style="left:480px;top:841.4px;font-size:16px;color:#d0d0d0;transform:scaleX(0.9);font-style:italic;">fx</span>
<svg style="left:594.5px;top:844.4px;" width="15" height="15" viewBox="0 0 15 15"><path d="M8.500 7.500a1.500 1.500 0 1 0-2 1.500 3.500 3.500 0 1 0 4-5.500 5.800 5.800 0 1 0 2.800 7.500" fill="none" stroke="#c0c0c0" stroke-width="1.400" transform="rotate(150 7.500 7.500)"/></svg>
<div style="left:617px;top:844px;width:111px;height:17px;background:#1a1a1a;border-radius:2px;"></div>
<span class="t" style="left:625px;top:842.4px;font-size:15px;color:#d0d0d0;transform:scaleX(0.9203);">None</span>
<svg style="left:712.5px;top:848.9px;" width="9" height="6" viewBox="0 0 9 6"><path d="M0.800 0.800l3.7 4 3.7-4" fill="none" stroke="#ccc" stroke-width="1.400"/></svg>
<span class="t" style="left:743px;top:840.9px;font-size:15px;color:#2d8ceb;transform:scaleX(0.9039);">100.0%</span>
<div style="left:7px;top:865px;width:17px;height:17px;background:#1d1d1d;"></div>
<div style="left:45px;top:865px;width:17px;height:17px;background:#1d1d1d;"></div>
<div style="left:64px;top:865px;width:17px;height:17px;background:#1d1d1d;"></div>
<svg style="left:7.0px;top:868.2px;" width="17" height="11" viewBox="0 0 17 11"><path d="M0.500 5.500C4 0 13 0 16.500 5.500 13 11 4 11 0.500 5.500z" fill="#d0d0d0"/><circle cx="8.500" cy="5.500" r="3.300" fill="#1c1c1c"/><circle cx="8.500" cy="5.500" r="1.600" fill="#d0d0d0"/></svg>
<svg style="left:93.0px;top:869.2px;" width="6" height="10" viewBox="0 0 6 10"><path d="M1 1l4 4-4 4" fill="none" stroke="#aaa" stroke-width="1.400"/></svg>
<div style="left:108px;top:865px;width:15px;height:15px;background:#b5a07a;"></div>
<span class="t" style="left:134px;top:862.5px;font-size:15px;color:#c2c2c2;transform:scaleX(0.8989);-webkit-text-stroke:0.450px #c2c2c2;">24</span>
<svg style="left:162px;top:866px;" width="20" height="16" viewBox="0 0 18 15"><rect x="0" y="0" width="18" height="15" rx="1" fill="#b8b8b8"/><rect x="2.500" y="2" width="13" height="9.500" fill="#3c3c3c"/><path d="M0.800 1.500h1M0.800 4h1M0.800 6.500h1M0.800 9h1M0.800 11.500h1M16.200 1.500h1M16.200 4h1M16.200 6.500h1M16.200 9h1M16.200 11.500h1" stroke="#333" stroke-width="1.200"/><circle cx="6.500" cy="5.500" r="2.600" fill="#3b8ee8"/><rect x="9.500" y="4" width="5" height="5" fill="#e23b3b"/><path d="M8.500 5.500l3.500 6h-7z" fill="#2aa44a"/><rect x="2" y="12.800" width="14" height="1.200" fill="#444"/></svg>
<span class="t" style="left:189px;top:863.2px;font-size:15px;color:#c6c6c6;transform:scaleX(1.0025);-webkit-text-stroke:0.450px #c6c6c6;">[white-precomp]</span>
<svg style="left:422.0px;top:866.7px;" width="16" height="13" viewBox="0 0 16 13"><path d="M3 8.500V6a5 5 0 0 1 10 0v2.500z" fill="#b4b4b4"/><path d="M0 9.500h16" stroke="#b4b4b4" stroke-width="1.300"/><path d="M5 10.500v2M8 10.500v2.500M11 10.500v2" stroke="#b4b4b4" stroke-width="1.300"/><path d="M6 4v3M10 4v3" stroke="#232323" stroke-width="1.200"/></svg>
<div style="left:441px;top:865px;width:16px;height:17px;background:#1d1d1d;"></div>
<div style="left:516px;top:865px;width:16px;height:17px;background:#1d1d1d;"></div>
<div style="left:535px;top:865px;width:16px;height:17px;background:#1d1d1d;"></div>
<div style="left:553px;top:865px;width:16px;height:17px;background:#1d1d1d;"></div>
<svg style="left:460.0px;top:866.2px;" width="14" height="14" viewBox="0 0 14 14"><path d="M1 13L13 1" stroke="#c4c4c4" stroke-width="1.500"/></svg>
<span class="t" style="left:480px;top:862.7px;font-size:16px;color:#d0d0d0;transform:scaleX(0.9);font-style:italic;">fx</span>
<svg style="left:594.5px;top:865.7px;" width="15" height="15" viewBox="0 0 15 15"><path d="M8.500 7.500a1.500 1.500 0 1 0-2 1.500 3.500 3.500 0 1 0 4-5.500 5.800 5.800 0 1 0 2.800 7.500" fill="none" stroke="#c0c0c0" stroke-width="1.400" transform="rotate(150 7.500 7.500)"/></svg>
<div style="left:617px;top:865px;width:111px;height:17px;background:#1a1a1a;border-radius:2px;"></div>
<span class="t" style="left:625px;top:863.7px;font-size:15px;color:#d0d0d0;transform:scaleX(0.9203);">None</span>
<svg style="left:712.5px;top:870.2px;" width="9" height="6" viewBox="0 0 9 6"><path d="M0.800 0.800l3.7 4 3.7-4" fill="none" stroke="#ccc" stroke-width="1.400"/></svg>
<span class="t" style="left:743px;top:862.2px;font-size:15px;color:#2d8ceb;transform:scaleX(0.9039);">100.0%</span>
<div style="left:7px;top:886px;width:17px;height:17px;background:#1d1d1d;"></div>
<div style="left:45px;top:886px;width:17px;height:17px;background:#1d1d1d;"></div>
<div style="left:64px;top:886px;width:17px;height:17px;background:#1d1d1d;"></div>
<svg style="left:7.0px;top:889.5px;" width="17" height="11" viewBox="0 0 17 11"><path d="M0.500 5.500C4 0 13 0 16.500 5.500 13 11 4 11 0.500 5.500z" fill="#d0d0d0"/><circle cx="8.500" cy="5.500" r="3.300" fill="#1c1c1c"/><circle cx="8.500" cy="5.500" r="1.600" fill="#d0d0d0"/></svg>
<svg style="left:94.5px;top:892.5px;" width="9" height="6" viewBox="0 0 9 6"><path d="M0.800 0.800l3.7 4 3.7-4" fill="none" stroke="#aaa" stroke-width="1.400"/></svg>
<div style="left:108px;top:886px;width:15px;height:15px;background:#b5a07a;"></div>
<span class="t" style="left:134px;top:883.8px;font-size:15px;color:#c2c2c2;transform:scaleX(0.8989);-webkit-text-stroke:0.450px #c2c2c2;">25</span>
<svg style="left:162px;top:888px;" width="20" height="16" viewBox="0 0 18 15"><rect x="0" y="0" width="18" height="15" rx="1" fill="#b8b8b8"/><rect x="2.500" y="2" width="13" height="9.500" fill="#3c3c3c"/><path d="M0.800 1.500h1M0.800 4h1M0.800 6.500h1M0.800 9h1M0.800 11.500h1M16.200 1.500h1M16.200 4h1M16.200 6.500h1M16.200 9h1M16.200 11.500h1" stroke="#333" stroke-width="1.200"/><circle cx="6.500" cy="5.500" r="2.600" fill="#3b8ee8"/><rect x="9.500" y="4" width="5" height="5" fill="#e23b3b"/><path d="M8.500 5.500l3.500 6h-7z" fill="#2aa44a"/><rect x="2" y="12.800" width="14" height="1.200" fill="#444"/></svg>
<span class="t" style="left:189px;top:884.5px;font-size:15px;color:#c6c6c6;transform:scaleX(0.978);-webkit-text-stroke:0.450px #c6c6c6;">[Pre-comp 2]</span>
<svg style="left:422.0px;top:888.0px;" width="16" height="13" viewBox="0 0 16 13"><path d="M3 8.500V6a5 5 0 0 1 10 0v2.500z" fill="#b4b4b4"/><path d="M0 9.500h16" stroke="#b4b4b4" stroke-width="1.300"/><path d="M5 10.500v2M8 10.500v2.500M11 10.500v2" stroke="#b4b4b4" stroke-width="1.300"/><path d="M6 4v3M10 4v3" stroke="#232323" stroke-width="1.200"/></svg>
<div style="left:441px;top:886px;width:16px;height:17px;background:#1d1d1d;"></div>
<div style="left:516px;top:886px;width:16px;height:17px;background:#1d1d1d;"></div>
<div style="left:535px;top:886px;width:16px;height:17px;background:#1d1d1d;"></div>
<div style="left:553px;top:886px;width:16px;height:17px;background:#1d1d1d;"></div>
<svg style="left:460.0px;top:887.5px;" width="14" height="14" viewBox="0 0 14 14"><path d="M1 13L13 1" stroke="#c4c4c4" stroke-width="1.500"/></svg>
<span class="t" style="left:480px;top:884.0px;font-size:16px;color:#d0d0d0;transform:scaleX(0.9);font-style:italic;">fx</span>
<svg style="left:517.0px;top:887.0px;" width="16" height="15" viewBox="0 0 16 15"><circle cx="5" cy="10.500" r="4" fill="none" stroke="#b4b4b4" stroke-width="1.100"/><circle cx="7" cy="8.500" r="4" fill="none" stroke="#b4b4b4" stroke-width="1.100"/><circle cx="10" cy="5.500" r="5" fill="#8a8a8a"/></svg>
<svg style="left:594.5px;top:887.0px;" width="15" height="15" viewBox="0 0 15 15"><path d="M8.500 7.500a1.500 1.500 0 1 0-2 1.500 3.500 3.500 0 1 0 4-5.500 5.800 5.800 0 1 0 2.800 7.500" fill="none" stroke="#c0c0c0" stroke-width="1.400" transform="rotate(150 7.500 7.500)"/></svg>
<div style="left:617px;top:886px;width:111px;height:17px;background:#1a1a1a;border-radius:2px;"></div>
<span class="t" style="left:625px;top:885.0px;font-size:15px;color:#d0d0d0;transform:scaleX(0.9203);">None</span>
<svg style="left:712.5px;top:891.5px;" width="9" height="6" viewBox="0 0 9 6"><path d="M0.800 0.800l3.7 4 3.7-4" fill="none" stroke="#ccc" stroke-width="1.400"/></svg>
<span class="t" style="left:743px;top:883.5px;font-size:15px;color:#2d8ceb;transform:scaleX(0.9039);">100.0%</span>
<div style="left:7px;top:972px;width:17px;height:17px;background:#1d1d1d;"></div>
<div style="left:45px;top:972px;width:17px;height:17px;background:#1d1d1d;"></div>
<div style="left:64px;top:972px;width:17px;height:17px;background:#1d1d1d;"></div>
<svg style="left:7.0px;top:974.7px;" width="17" height="11" viewBox="0 0 17 11"><path d="M0.500 5.500C4 0 13 0 16.500 5.500 13 11 4 11 0.500 5.500z" fill="#d0d0d0"/><circle cx="8.500" cy="5.500" r="3.300" fill="#1c1c1c"/><circle cx="8.500" cy="5.500" r="1.600" fill="#d0d0d0"/></svg>
<svg style="left:94.5px;top:977.7px;" width="9" height="6" viewBox="0 0 9 6"><path d="M0.800 0.800l3.7 4 3.7-4" fill="none" stroke="#aaa" stroke-width="1.400"/></svg>
<div style="left:108px;top:972px;width:15px;height:15px;background:#b53a3a;"></div>
<span class="t" style="left:134px;top:969.0px;font-size:15px;color:#c2c2c2;transform:scaleX(0.8989);-webkit-text-stroke:0.450px #c2c2c2;">26</span>
<div style="left:164px;top:972px;width:17px;height:16px;background:#fff;border-radius:2px;box-shadow:0 0 0 1px #111;"></div>
<span class="t" style="left:189px;top:969.7px;font-size:15px;color:#c6c6c6;transform:scaleX(0.9994);-webkit-text-stroke:0.450px #c6c6c6;">[Null 16]</span>
<svg style="left:422.0px;top:973.2px;" width="16" height="13" viewBox="0 0 16 13"><path d="M3 8.500V6a5 5 0 0 1 10 0v2.500z" fill="#b4b4b4"/><path d="M0 9.500h16" stroke="#b4b4b4" stroke-width="1.300"/><path d="M5 10.500v2M8 10.500v2.500M11 10.500v2" stroke="#b4b4b4" stroke-width="1.300"/><path d="M6 4v3M10 4v3" stroke="#232323" stroke-width="1.200"/></svg>
<div style="left:441px;top:972px;width:16px;height:17px;background:#1d1d1d;"></div>
<div style="left:516px;top:972px;width:16px;height:17px;background:#1d1d1d;"></div>
<div style="left:535px;top:972px;width:16px;height:17px;background:#1d1d1d;"></div>
<div style="left:553px;top:972px;width:16px;height:17px;background:#1d1d1d;"></div>
<svg style="left:460.0px;top:972.7px;" width="14" height="14" viewBox="0 0 14 14"><path d="M1 13L13 1" stroke="#c4c4c4" stroke-width="1.500"/></svg>
<svg style="left:517.0px;top:972.2px;" width="16" height="15" viewBox="0 0 16 15"><circle cx="5" cy="10.500" r="4" fill="none" stroke="#b4b4b4" stroke-width="1.100"/><circle cx="7" cy="8.500" r="4" fill="none" stroke="#b4b4b4" stroke-width="1.100"/><circle cx="10" cy="5.500" r="5" fill="#8a8a8a"/></svg>
<svg style="left:555.5px;top:972.7px;" width="13" height="14" viewBox="0 0 13 14"><path d="M6.500 0.800l5.500 3v6.400l-5.500 3-5.500-3V3.800zM1 3.800l5.500 3 5.500-3M6.500 6.800v6.400" fill="none" stroke="#b4b4b4" stroke-width="1.300"/></svg>
<svg style="left:594.5px;top:972.2px;" width="15" height="15" viewBox="0 0 15 15"><path d="M8.500 7.500a1.500 1.500 0 1 0-2 1.500 3.500 3.500 0 1 0 4-5.500 5.800 5.800 0 1 0 2.800 7.500" fill="none" stroke="#c0c0c0" stroke-width="1.400" transform="rotate(150 7.500 7.500)"/></svg>
<div style="left:617px;top:972px;width:111px;height:17px;background:#1a1a1a;border-radius:2px;"></div>
<span class="t" style="left:625px;top:970.2px;font-size:15px;color:#d0d0d0;transform:scaleX(0.9203);">None</span>
<svg style="left:712.5px;top:976.7px;" width="9" height="6" viewBox="0 0 9 6"><path d="M0.800 0.800l3.7 4 3.7-4" fill="none" stroke="#ccc" stroke-width="1.400"/></svg>
<span class="t" style="left:743px;top:968.7px;font-size:15px;color:#2d8ceb;transform:scaleX(0.9039);">100.0%</span>
<div style="left:6px;top:906px;width:18px;height:19px;background:#1e1e1e;"></div>
<span class="t" style="left:8px;top:905.0px;font-size:17px;color:#c8c8c8;transform:scaleX(0.9);font-style:italic;">fx</span>
<svg style="left:136.5px;top:914.0px;" width="9" height="6" viewBox="0 0 9 6"><path d="M0.800 0.800l3.7 4 3.7-4" fill="none" stroke="#aaa" stroke-width="1.400"/></svg>
<span class="t" style="left:157px;top:907.0px;font-size:15px;color:#b9b9b9;transform:scaleX(0.8883);">Luma Key</span>
<span class="t" style="left:423px;top:905.0px;font-size:15px;color:#2d8ceb;transform:scaleX(0.8166);">Reset</span>
<svg style="left:10.5px;top:932.0px;" width="7" height="10" viewBox="0 0 7 10"><path d="M7 0v10L0 5z" fill="#4a4a4a"/></svg>
<svg style="left:28.5px;top:931.5px;" width="11" height="11" viewBox="0 0 11 11"><path d="M5.500 0.800L10.200 5.500 5.500 10.200 0.800 5.500z" fill="none" stroke="#b4b4b4" stroke-width="1.300"/></svg>
<svg style="left:50.0px;top:931.5px;" width="8" height="11" viewBox="0 0 8 11"><path d="M0 0v11l8-5.500z" fill="#c4c4c4"/></svg>
<div style="left:160px;top:936px;width:2px;height:2px;background:#444;"></div>
<div style="left:172px;top:927px;width:20px;height:20px;background:#1e1e1e;border-radius:2px;"></div>
<svg style="left:174.5px;top:928.0px;" width="15" height="17" viewBox="0 0 15 17"><circle cx="7.500" cy="10" r="6" fill="none" stroke="#2d8ceb" stroke-width="1.600"/><path d="M5 1h5M7.500 1v3M7.500 10l3-3.500" stroke="#2d8ceb" stroke-width="1.500" fill="none"/></svg>
<svg style="left:196.5px;top:930.5px;" width="15" height="13" viewBox="0 0 15 13"><path d="M1 0v12h14" fill="none" stroke="#b4b4b4" stroke-width="1.500"/><path d="M3 9l3-5 3 3 4-3" fill="none" stroke="#b4b4b4" stroke-width="1.300"/></svg>
<span class="t" style="left:222px;top:928.0px;font-size:15px;color:#b9b9b9;transform:scaleX(0.9295);">Threshold</span>
<span class="t" style="left:423px;top:926.0px;font-size:15px;color:#2d8ceb;transform:scaleX(0.9189);">238</span>
<svg style="left:610.5px;top:929.5px;" width="15" height="15" viewBox="0 0 15 15"><path d="M8.500 7.500a1.500 1.500 0 1 0-2 1.500 3.500 3.500 0 1 0 4-5.500 5.800 5.800 0 1 0 2.800 7.500" fill="none" stroke="#c0c0c0" stroke-width="1.400" transform="rotate(150 7.500 7.500)"/></svg>
<div style="left:2px;top:990px;width:828px;height:8px;overflow:hidden;background:#232323;"><svg style="position:absolute;left:152.500px;top:1px" width="15" height="17" viewBox="0 0 15 17"><circle cx="7.500" cy="10" r="6" fill="none" stroke="#2d8ceb" stroke-width="1.600"/><path d="M5 1h5M7.500 1v3" stroke="#2d8ceb" stroke-width="1.500"/></svg><svg style="position:absolute;left:176.500px;top:3px" width="15" height="13" viewBox="0 0 15 13"><path d="M1 0v12h14" fill="none" stroke="#b4b4b4" stroke-width="1.500"/><path d="M3 9l3-5 3 3 4-3" fill="none" stroke="#b4b4b4" stroke-width="1.300"/></svg><span class="t" style="position:absolute;left:197px;top:0.500px;font-size:15px;color:#b9b9b9;transform:scaleX(0.910)">Position</span><span class="t" style="position:absolute;left:421px;top:-0.500px;font-size:15px;color:#2d8ceb;transform:scaleX(0.890)">960.0,540.0,0.0</span><svg style="position:absolute;left:608.500px;top:3px" width="15" height="15" viewBox="0 0 15 15"><path d="M8.500 7.500a1.500 1.500 0 1 0-2 1.500 3.500 3.500 0 1 0 4-5.500 5.800 5.800 0 1 0 2.800 7.500" fill="none" stroke="#c0c0c0" stroke-width="1.400" transform="rotate(150 7.500 7.500)"/></svg><svg style="position:absolute;left:8.500px;top:5px" width="7" height="10"><path d="M7 0v10L0 5z" fill="#4a4a4a"/></svg><svg style="position:absolute;left:26.500px;top:4.500px" width="11" height="11"><path d="M5.500 0.800L10.200 5.500 5.500 10.200 0.800 5.500z" fill="none" stroke="#b4b4b4" stroke-width="1.300"/></svg><svg style="position:absolute;left:48px;top:4.500px" width="8" height="11"><path d="M0 0v11l8-5.500z" fill="#c4c4c4"/></svg></div>
<div style="left:2px;top:998px;width:828px;height:2px;background:#111;"></div>
<div style="left:2px;top:1000px;width:1916px;height:18px;background:#222222;"></div>
<svg style="left:9.0px;top:1002.0px;" width="14" height="14" viewBox="0 0 14 14"><rect x="0.800" y="0.800" width="9" height="9" fill="none" stroke="#2d8ceb" stroke-width="1.400"/><rect x="4.200" y="4.200" width="9" height="9" fill="#1f1f1f" stroke="#2d8ceb" stroke-width="1.400"/><rect x="7.500" y="7.500" width="3" height="3" fill="#2d8ceb"/></svg>
<svg style="left:31.5px;top:1002.0px;" width="15" height="14" viewBox="0 0 15 14"><circle cx="5.500" cy="5.500" r="4.700" fill="none" stroke="#b4b4b4" stroke-width="1.300"/><rect x="6" y="6" width="8" height="7.500" fill="none" stroke="#b4b4b4" stroke-width="1.300"/></svg>
<svg style="left:55.0px;top:1002.0px;" width="14" height="14" viewBox="0 0 14 14"><path d="M2 0l3 2h4l3-2v5l2 2-2 2v5l-3-2H5l-3 2V9L0 7l2-2z" fill="#2d8ceb"/><path d="M7 0v14" stroke="#1f1f1f" stroke-width="1.200"/></svg>
<div style="left:419px;top:1001px;width:167px;height:16px;background:#232323;border-radius:2px 2px 0 0;box-shadow:0 0 0 1px #2c2c2c;"></div>
<span class="t" style="left:425px;top:1000.0px;font-size:15px;color:#9c9c9c;transform:scaleX(0.9281);">Toggle Switches / Modes</span>
<div style="left:830px;top:714px;width:1px;height:285px;background:#0c0c0c;"></div>
<div style="left:831px;top:714px;width:1067px;height:285px;background:#232323;"></div>
<div style="left:834px;top:716px;width:1062px;height:12px;background:#171717;border-radius:3px;"></div>
<div style="left:838px;top:717px;width:1052px;height:10px;background:#656565;"></div>
<div style="left:833px;top:716px;width:6px;height:12px;background:#2d8ceb;border-radius:5px 0 0 5px;"></div>
<div style="left:1889px;top:716px;width:7px;height:12px;background:#2d8ceb;border-radius:0 5px 5px 0;"></div>
<div style="left:964px;top:718px;width:1px;height:8px;background:#2d8ceb;"></div>
<span class="t" style="left:830px;top:727.5px;font-size:13px;color:#a8a8a8;transform:scaleX(0.8802);clip-path:inset(0 0 0 3.500px);">0:00s</span>
<div style="left:840px;top:742px;width:1px;height:11px;background:#8a8a8a;"></div>
<span class="t" style="left:932.6px;top:727.5px;font-size:13px;color:#a8a8a8;transform:scaleX(0.8823);">02s</span>
<div style="left:943px;top:746px;width:1px;height:7px;background:#8a8a8a;"></div>
<span class="t" style="left:1035.7px;top:727.5px;font-size:13px;color:#a8a8a8;transform:scaleX(0.8823);">04s</span>
<div style="left:1046px;top:746px;width:1px;height:7px;background:#8a8a8a;"></div>
<div style="left:1069px;top:741px;width:1px;height:1px;background:#2d5f96;"></div>
<span class="t" style="left:1138.8px;top:727.5px;font-size:13px;color:#a8a8a8;transform:scaleX(0.8823);">06s</span>
<div style="left:1149px;top:746px;width:1px;height:7px;background:#8a8a8a;"></div>
<div style="left:1172px;top:741px;width:1px;height:1px;background:#2d5f96;"></div>
<span class="t" style="left:1241.9px;top:727.5px;font-size:13px;color:#a8a8a8;transform:scaleX(0.8823);">08s</span>
<div style="left:1252px;top:746px;width:1px;height:7px;background:#8a8a8a;"></div>
<div style="left:1275px;top:741px;width:1px;height:1px;background:#2d5f96;"></div>
<span class="t" style="left:1345.0px;top:727.5px;font-size:13px;color:#a8a8a8;transform:scaleX(0.8823);">10s</span>
<div style="left:1356px;top:746px;width:1px;height:7px;background:#8a8a8a;"></div>
<div style="left:1379px;top:741px;width:1px;height:1px;background:#2d5f96;"></div>
<span class="t" style="left:1448.1px;top:727.5px;font-size:13px;color:#a8a8a8;transform:scaleX(0.8823);">12s</span>
<div style="left:1459px;top:746px;width:1px;height:7px;background:#8a8a8a;"></div>
<div style="left:1482px;top:741px;width:1px;height:1px;background:#2d5f96;"></div>
<span class="t" style="left:1551.1999999999998px;top:727.5px;font-size:13px;color:#a8a8a8;transform:scaleX(0.8823);">14s</span>
<div style="left:1562px;top:746px;width:1px;height:7px;background:#8a8a8a;"></div>
<div style="left:1585px;top:741px;width:1px;height:1px;background:#2d5f96;"></div>
<span class="t" style="left:1654.3px;top:727.5px;font-size:13px;color:#a8a8a8;transform:scaleX(0.8823);">16s</span>
<div style="left:1665px;top:746px;width:1px;height:7px;background:#8a8a8a;"></div>
<div style="left:1688px;top:741px;width:1px;height:1px;background:#2d5f96;"></div>
<span class="t" style="left:1757.4px;top:727.5px;font-size:13px;color:#a8a8a8;transform:scaleX(0.8823);">18s</span>
<div style="left:1768px;top:746px;width:1px;height:7px;background:#8a8a8a;"></div>
<div style="left:1791px;top:741px;width:1px;height:1px;background:#2d5f96;"></div>
<span class="t" style="left:1860.5px;top:727.5px;font-size:13px;color:#a8a8a8;transform:scaleX(0.8823);">20s</span>
<div style="left:1871px;top:746px;width:2px;height:13px;background:#5c5c5c;"></div>
<div style="left:1894px;top:741px;width:1px;height:1px;background:#2d5f96;"></div>
<div style="left:832px;top:753px;width:1066px;height:1px;background:#141414;"></div>
<div style="left:838px;top:754px;width:987px;height:18px;background:#636363;"></div>
<div style="left:1829px;top:754px;width:68px;height:18px;background:#232323;"></div>
<div style="left:1888px;top:754px;width:9px;height:18px;background:#1e1e1e;"></div>
<div style="left:832px;top:754px;width:7px;height:18px;background:#2d8ceb;border-radius:4px 0 0 4px;"></div>
<div style="left:1822px;top:754px;width:7px;height:18px;background:#2d8ceb;border-radius:0 4px 4px 0;"></div>
<div style="left:832px;top:772px;width:1066px;height:1px;background:#141414;"></div>
<div style="left:832px;top:773px;width:1066px;height:5px;background:#272727;"></div>
<div style="left:832px;top:778px;width:1066px;height:1px;background:#0c0c0c;"></div>
<div style="left:1870px;top:746px;width:2px;height:13px;background:#5c5c5c;"></div>
<div style="left:950px;top:754px;width:73px;height:15px;background:#b8b8b8;box-shadow:0 0 0 1px #4a4a4a;border-radius:0 2px 2px 0;"></div>
<span class="t" style="left:959px;top:751.5px;font-size:13px;color:#262626;transform:scaleX(0.9401);">insta-post</span>
<svg style="left:942.0px;top:759.5px;" width="14" height="11" viewBox="0 0 14 11"><path d="M0.700 10.500V6L7 0.700 13.300 6v4.500z" fill="#b8b8b8" stroke="#2a2a2a" stroke-width="1"/></svg>
<div style="left:1086px;top:754px;width:6px;height:15px;background:#dcdcdc;"></div>
<div style="left:1052px;top:754px;width:34px;height:15px;background:#b8b8b8;box-shadow:0 0 0 1px #4a4a4a;border-radius:0 2px 2px 0;"></div>
<span class="t" style="left:1060px;top:751.5px;font-size:13px;color:#262626;transform:scaleX(0.9487);">map</span>
<svg style="left:1044.0px;top:759.5px;" width="14" height="11" viewBox="0 0 14 11"><path d="M0.700 10.500V6L7 0.700 13.300 6v4.500z" fill="#b8b8b8" stroke="#2a2a2a" stroke-width="1"/></svg>
<div style="left:1092px;top:754px;width:34px;height:15px;background:#b8b8b8;box-shadow:0 0 0 1px #4a4a4a;border-radius:0 2px 2px 0;"></div>
<span class="t" style="left:1095px;top:751.5px;font-size:13px;color:#262626;transform:scaleX(1.0265);">rota</span>
<svg style="left:1080.0px;top:759.5px;" width="14" height="11" viewBox="0 0 14 11"><path d="M0.700 10.500V6L7 0.700 13.300 6v4.500z" fill="#b8b8b8" stroke="#2a2a2a" stroke-width="1"/></svg>
<div style="left:1129px;top:754px;width:42px;height:15px;background:#b8b8b8;box-shadow:0 0 0 1px #4a4a4a;border-radius:0 2px 2px 0;"></div>
<span class="t" style="left:1136px;top:751.5px;font-size:13px;color:#262626;transform:scaleX(1.0172);">chat</span>
<svg style="left:1121.0px;top:759.5px;" width="14" height="11" viewBox="0 0 14 11"><path d="M0.700 10.500V6L7 0.700 13.300 6v4.500z" fill="#b8b8b8" stroke="#2a2a2a" stroke-width="1"/></svg>
<div style="left:1240px;top:754px;width:6px;height:15px;background:#dcdcdc;"></div>
<div style="left:1225px;top:754px;width:15px;height:15px;background:#b8b8b8;box-shadow:0 0 0 1px #4a4a4a;border-radius:0 2px 2px 0;"></div>
<span class="t" style="left:1232px;top:751.5px;font-size:13px;color:#262626;transform:scaleX(0.8294);">2</span>
<svg style="left:1217.0px;top:759.5px;" width="14" height="11" viewBox="0 0 14 11"><path d="M0.700 10.500V6L7 0.700 13.300 6v4.500z" fill="#b8b8b8" stroke="#2a2a2a" stroke-width="1"/></svg>
<div style="left:1246px;top:754px;width:15px;height:15px;background:#b8b8b8;box-shadow:0 0 0 1px #4a4a4a;border-radius:0 2px 2px 0;"></div>
<span class="t" style="left:1248px;top:751.5px;font-size:13px;color:#262626;transform:scaleX(0.8294);">1</span>
<svg style="left:1232.0px;top:759.5px;" width="14" height="11" viewBox="0 0 14 11"><path d="M0.700 10.500V6L7 0.700 13.300 6v4.500z" fill="#b8b8b8" stroke="#2a2a2a" stroke-width="1"/></svg>
<div style="left:1387px;top:754px;width:40px;height:15px;background:#b8b8b8;box-shadow:0 0 0 1px #4a4a4a;border-radius:0 2px 2px 0;"></div>
<span class="t" style="left:1394px;top:751.5px;font-size:13px;color:#262626;transform:scaleX(1.0478);">new</span>
<svg style="left:1379.0px;top:759.5px;" width="14" height="11" viewBox="0 0 14 11"><path d="M0.700 10.500V6L7 0.700 13.300 6v4.500z" fill="#b8b8b8" stroke="#2a2a2a" stroke-width="1"/></svg>
<div style="left:1435px;top:754px;width:21px;height:15px;background:#b8b8b8;box-shadow:0 0 0 1px #4a4a4a;border-radius:0 2px 2px 0;"></div>
<span class="t" style="left:1442px;top:751.5px;font-size:13px;color:#262626;transform:scaleX(0.9676);">3</span>
<svg style="left:1427.0px;top:759.5px;" width="14" height="11" viewBox="0 0 14 11"><path d="M0.700 10.500V6L7 0.700 13.300 6v4.500z" fill="#b8b8b8" stroke="#2a2a2a" stroke-width="1"/></svg>
<div style="left:1519px;top:754px;width:21px;height:15px;background:#b8b8b8;box-shadow:0 0 0 1px #4a4a4a;border-radius:0 2px 2px 0;"></div>
<span class="t" style="left:1526px;top:751.5px;font-size:13px;color:#262626;transform:scaleX(0.8294);">4</span>
<svg style="left:1511.0px;top:759.5px;" width="14" height="11" viewBox="0 0 14 11"><path d="M0.700 10.500V6L7 0.700 13.300 6v4.500z" fill="#b8b8b8" stroke="#2a2a2a" stroke-width="1"/></svg>
<div style="left:839px;top:774px;width:1px;height:3px;background:#1fc41f;"></div>
<div style="left:930px;top:774px;width:2px;height:3px;background:#1fc41f;"></div>
<div style="left:934px;top:774px;width:1px;height:3px;background:#1fc41f;"></div>
<div style="left:943px;top:774px;width:1px;height:3px;background:#1fc41f;"></div>
<div style="left:946px;top:774px;width:6px;height:3px;background:#1fc41f;"></div>
<div style="left:962px;top:774px;width:28px;height:3px;background:#1fc41f;"></div>
<div style="left:992px;top:774px;width:2px;height:3px;background:#1fc41f;"></div>
<div style="left:996px;top:774px;width:2px;height:3px;background:#1fc41f;"></div>
<div style="left:1001px;top:774px;width:2px;height:3px;background:#1fc41f;"></div>
<div style="left:1006px;top:774px;width:3px;height:3px;background:#1fc41f;"></div>
<div style="left:1018px;top:774px;width:1px;height:3px;background:#1fc41f;"></div>
<div style="left:1024px;top:774px;width:2px;height:3px;background:#1fc41f;"></div>
<div style="left:1027px;top:774px;width:1px;height:3px;background:#1fc41f;"></div>
<div style="left:1036px;top:774px;width:4px;height:3px;background:#1fc41f;"></div>
<div style="left:1044px;top:774px;width:5px;height:3px;background:#1fc41f;"></div>
<div style="left:1092px;top:774px;width:2px;height:3px;background:#1fc41f;"></div>
<div style="left:1100px;top:774px;width:1px;height:3px;background:#1fc41f;"></div>
<div style="left:1149px;top:774px;width:1px;height:3px;background:#1fc41f;"></div>
<div style="left:1173px;top:774px;width:1px;height:3px;background:#1fc41f;"></div>
<div style="left:1193px;top:774px;width:2px;height:3px;background:#1fc41f;"></div>
<div style="left:1214px;top:774px;width:1px;height:3px;background:#1fc41f;"></div>
<div style="left:1226px;top:774px;width:2px;height:3px;background:#1fc41f;"></div>
<div style="left:1237px;top:774px;width:1px;height:3px;background:#1fc41f;"></div>
<div style="left:1246px;top:774px;width:1px;height:3px;background:#1fc41f;"></div>
<div style="left:1259px;top:774px;width:1px;height:3px;background:#1fc41f;"></div>
<div style="left:1269px;top:774px;width:3px;height:3px;background:#1fc41f;"></div>
<div style="left:1276px;top:774px;width:2px;height:3px;background:#1fc41f;"></div>
<div style="left:1287px;top:774px;width:1px;height:3px;background:#1fc41f;"></div>
<div style="left:1289px;top:774px;width:2px;height:3px;background:#1fc41f;"></div>
<div style="left:1338px;top:774px;width:1px;height:3px;background:#1fc41f;"></div>
<div style="left:1361px;top:774px;width:4px;height:3px;background:#1fc41f;"></div>
<div style="left:1371px;top:774px;width:3px;height:3px;background:#1fc41f;"></div>
<div style="left:831px;top:779px;width:9px;height:219px;background:#2b2b2b;"></div>
<div style="left:840px;top:779px;width:982px;height:219px;background:#3b3b3b;"></div>
<div style="left:1822px;top:779px;width:76px;height:219px;background:#292929;"></div>
<div style="left:831px;top:798px;width:1067px;height:2px;background:#2b2b2b;"></div>
<div style="left:831px;top:819px;width:1067px;height:2px;background:#2b2b2b;"></div>
<div style="left:831px;top:840px;width:1067px;height:2px;background:#2b2b2b;"></div>
<div style="left:831px;top:862px;width:1067px;height:2px;background:#2b2b2b;"></div>
<div style="left:831px;top:883px;width:1067px;height:2px;background:#2b2b2b;"></div>
<div style="left:831px;top:904px;width:1067px;height:2px;background:#2b2b2b;"></div>
<div style="left:831px;top:925px;width:1067px;height:2px;background:#2b2b2b;"></div>
<div style="left:831px;top:947px;width:1067px;height:2px;background:#2b2b2b;"></div>
<div style="left:831px;top:968px;width:1067px;height:2px;background:#2b2b2b;"></div>
<div style="left:831px;top:989px;width:1067px;height:2px;background:#2b2b2b;"></div>
<div style="left:831px;top:1011px;width:1067px;height:2px;background:#2b2b2b;"></div>
<div style="left:831px;top:949px;width:1067px;height:19px;background:#232323;"></div>
<div style="left:1471px;top:800px;width:424px;height:19px;background:#4c5453;border-radius:0 3px 3px 0;box-shadow:0 0 0 1px #5c6e6c inset;"></div>
<div style="left:1471px;top:800px;width:9px;height:19px;background:#73888a;"></div>
<div style="left:1471px;top:821px;width:419px;height:19px;background:#4c5453;border-radius:0 3px 3px 0;box-shadow:0 0 0 1px #5c6e6c inset;"></div>
<div style="left:1471px;top:821px;width:9px;height:19px;background:#73888a;"></div>
<div style="left:1502px;top:842px;width:387px;height:20px;background:#7a393a;"></div>
<div style="left:1471px;top:864px;width:424px;height:19px;background:#4d4943;border-radius:0 3px 3px 0;box-shadow:0 0 0 1px #5e5747 inset;"></div>
<div style="left:1471px;top:864px;width:31px;height:19px;background:#7b715f;box-shadow:0 0 0 1px #6a614f inset;"></div>
<svg style="left:1472px;top:865px;" width="8" height="8" viewBox="0 0 8 8"><path d="M0 0h8Q0 0 0 8z" fill="#3a342c"/></svg>
<div style="left:1384px;top:885px;width:138px;height:19px;background:#4b4743;border-radius:0 3px 3px 0;box-shadow:0 0 0 1px #5e5747 inset;"></div>
<div style="left:1384px;top:885px;width:97px;height:19px;background:#7b715f;box-shadow:0 0 0 1px #6a614f inset;"></div>
<svg style="left:1385px;top:886px;" width="8" height="8" viewBox="0 0 8 8"><path d="M0 0h8Q0 0 0 8z" fill="#3a342c"/></svg>
<div style="left:839px;top:970px;width:564px;height:19px;background:#7a393a;"></div>
<div style="left:1401px;top:970px;width:2px;height:19px;background:#8a3a3a;"></div>
<svg style="left:1499.0px;top:783.5px;" width="12" height="11" viewBox="0 0 12 11"><path d="M0 0h12L8 3.500v4L12 11H0l4-3.500v-4z" fill="#c8c8c8"/></svg>
<svg style="left:1544.0px;top:783.5px;" width="12" height="11" viewBox="0 0 12 11"><path d="M0 0h12L8 3.500v4L12 11H0l4-3.500v-4z" fill="#c8c8c8"/></svg>
<svg style="left:1389.0px;top:932.0px;" width="16" height="10" viewBox="0 0 16 10"><path d="M0 5l4.500-4.500V9.500zM16 5l-4.500-4.500V9.500z" fill="#b8b8b8"/><rect x="5" y="0.500" width="2.500" height="9" fill="#c8c8c8"/><rect x="8.500" y="0.500" width="2.500" height="9" fill="#c8c8c8"/></svg>
<div style="left:1379px;top:995px;width:11px;height:1px;background:#c8c8c8;"></div>
<div style="left:1393px;top:995px;width:10px;height:1px;background:#c8c8c8;"></div>
<div style="left:964px;top:748px;width:1px;height:250px;background:#3a8ee6;"></div>
<svg style="left:957.0px;top:734.0px;" width="15" height="16" viewBox="0 0 15 16"><path d="M0.500 0.500h14v8L8 15.500h-1L0.500 8.500z" fill="#2d8ceb"/><path d="M5.500 8h4M7.500 8v7" stroke="#15345a" stroke-width="1"/></svg>
<svg style="left:960.0px;top:908.5px;" width="9" height="15" viewBox="0 0 9 15"><path d="M0.500 0.800h8M0.500 14.200h8M4.500 0.800v13.400" stroke="#c8c8c8" stroke-width="1.600" fill="none"/></svg>
<div style="left:1898px;top:714px;width:20px;height:304px;background:#222222;"></div>
<div style="left:1898px;top:714px;width:1px;height:284px;background:#1c1c1c;"></div>
<div style="left:1898px;top:778px;width:20px;height:1px;background:#0c0c0c;"></div>
<svg style="left:1900.5px;top:755.5px;" width="15" height="17" viewBox="0 0 15 17"><path d="M0 0h15v9l-7.500 8L0 9z" fill="#b8b8b8"/></svg>
<svg style="left:1898.0px;top:782.0px;" width="18" height="14" viewBox="0 0 18 14"><path d="M1 9L9 1v5h8v6H9" fill="none" stroke="#b8b8b8" stroke-width="1.500"/><rect x="10" y="3" width="8" height="6" fill="#b8b8b8"/><circle cx="8" cy="10.500" r="3" fill="#1f1f1f" stroke="#b8b8b8" stroke-width="1.400"/></svg>
<div style="left:1899px;top:848px;width:18px;height:32px;background:#333;border-radius:9px;"></div>
<svg style="left:837.0px;top:1006.0px;" width="12" height="6" viewBox="0 0 12 6"><path d="M0 6l4-4 2 2 2-4 4 6z" fill="#c0c0c0"/></svg>
<div style="left:876px;top:1008px;width:47px;height:2px;background:#3c3c3c;"></div>
<div style="left:863px;top:1004px;width:12px;height:12px;background:#1f1f1f;border:2.500px solid #a8a8a8;border-radius:50%;box-sizing:border-box;"></div>
<svg style="left:938.0px;top:1004.5px;" width="20" height="9" viewBox="0 0 20 9"><path d="M0 9l5-6 2 2.500L12 0l8 9z" fill="#c0c0c0"/><path d="M4 9l3-4" stroke="#1f1f1f" stroke-width="1.200"/></svg>
</body></html>
